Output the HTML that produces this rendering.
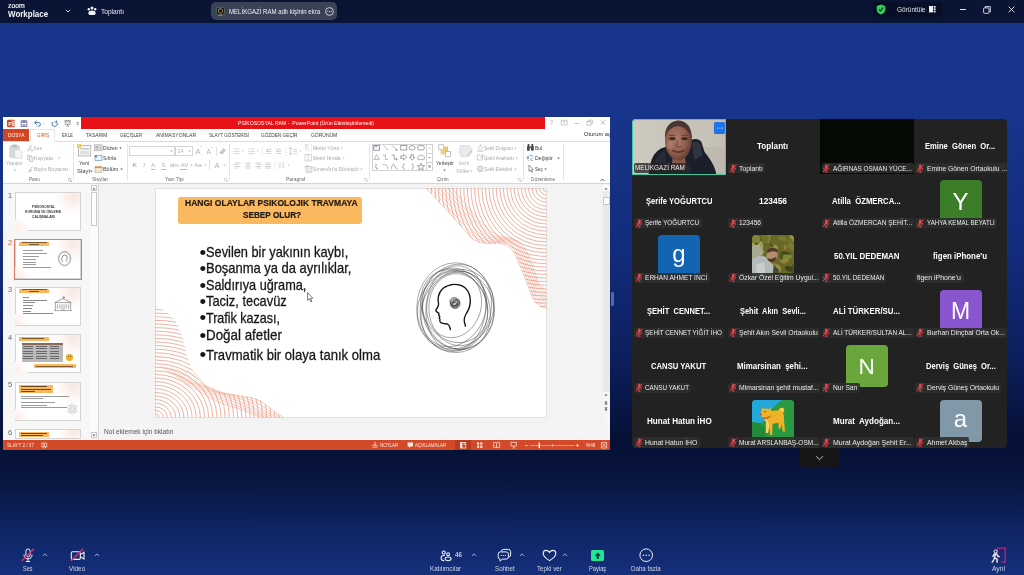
<!DOCTYPE html>
<html lang="tr">
<head>
<meta charset="utf-8">
<title>Zoom Workplace</title>
<style>
*{box-sizing:border-box;margin:0;padding:0}
html,body{width:1024px;height:575px;overflow:hidden}
body{position:relative;font-family:"Liberation Sans",sans-serif;color:#fff;
background:linear-gradient(to bottom,#17358b 0px,#17358b 110px,#132c7c 250px,#0d2060 350px,#061036 440px,#08153f 480px,#0f2464 530px,#15307c 575px);}
#app{position:absolute;left:0;top:0;width:1024px;height:575px;overflow:hidden;will-change:transform}
.abs{position:absolute}
.t{position:absolute;white-space:pre;line-height:1;display:block}
svg{position:absolute;overflow:visible}
</style>
</head>
<body>
<div id="app">
<div id="topbar" class="abs" style="left:0;top:0;width:1024px;height:22.5px;background:#0a1434"></div>
<span class="t" style="left:8.20px;top:2.16px;font-size:8px;color:#f2f4f8;transform:scaleX(0.8588);transform-origin:0 0;-webkit-text-stroke:0.2px #f2f4f8;">zoom</span>
<span class="t" style="left:8.20px;top:8.81px;font-size:9.6px;font-weight:bold;color:#f4f6fa;transform:scaleX(0.8310);transform-origin:0 0;">Workplace</span>
<svg style="left:64px;top:7.7px" width="8" height="6" viewBox="0 0 8 6"><path d="M1.8 1.8 L4 4 L6.2 1.8" fill="none" stroke="#c9cfdd" stroke-width="1"/></svg>
<svg style="left:87px;top:6px" width="10" height="10" viewBox="0 0 10 10"><g fill="#f0f2f7"><circle cx="5" cy="1.9" r="1.5"/><circle cx="1.8" cy="3.3" r="1.2"/><circle cx="8.2" cy="3.3" r="1.2"/><path d="M1.4 7.2 Q1.4 4.6 5 4.6 Q8.6 4.6 8.6 7.2 Q8.6 8.9 7 8.9 L3 8.9 Q1.4 8.9 1.4 7.2Z"/></g></svg>
<span class="t" style="left:101.00px;top:7.82px;font-size:7.6px;color:#e4e8f0;transform:scaleX(0.8640);transform-origin:0 0;">Toplantı</span>
<div class="abs" style="left:211px;top:2px;width:126px;height:18px;background:#3a4257;border-radius:5px"></div>
<svg style="left:216px;top:7px" width="9" height="9" viewBox="0 0 9 9"><rect x="0.5" y="0.5" width="8" height="7" rx="1.5" fill="#15181f" stroke="#6d7a5a" stroke-width="0.6"/><circle cx="4.5" cy="4" r="2.2" fill="none" stroke="#d08a3a" stroke-width="0.8"/><path d="M2.3 4 A2.2 2.2 0 0 1 4.5 1.8" fill="none" stroke="#3fb6c8" stroke-width="0.8"/><rect x="2.5" y="8" width="4" height="0.8" fill="#6fae5a"/></svg>
<span class="t" style="left:229.30px;top:7.96px;font-size:8px;color:#eef0f5;transform:scaleX(0.7589);transform-origin:0 0;">MELİKGAZİ RAM adlı kişinin ekra</span>
<svg style="left:325px;top:6.5px" width="9" height="9" viewBox="0 0 9 9"><circle cx="4.5" cy="4.5" r="3.9" fill="none" stroke="#e6e9f0" stroke-width="0.8"/><circle cx="2.8" cy="4.5" r="0.55" fill="#e6e9f0"/><circle cx="4.5" cy="4.5" r="0.55" fill="#e6e9f0"/><circle cx="6.2" cy="4.5" r="0.55" fill="#e6e9f0"/></svg>
<div class="abs" style="left:873px;top:2px;width:70px;height:15px;background:#070f26;border-radius:4px"></div>
<svg style="left:876px;top:4px" width="10" height="11" viewBox="0 0 10 11"><path d="M5 0.4 L9.3 2 L9.3 5.4 Q9.3 8.6 5 10.6 Q0.7 8.6 0.7 5.4 L0.7 2 Z" fill="#2fd157"/><path d="M2.9 5.3 L4.4 6.9 L7.2 3.7" fill="none" stroke="#0b2a17" stroke-width="1.1"/></svg>
<span class="t" style="left:897.00px;top:5.98px;font-size:7.2px;color:#e4e8f0;transform:scaleX(0.9013);transform-origin:0 0;">Görüntüle</span>
<svg style="left:929px;top:6.3px" width="7" height="7" viewBox="0 0 7 7"><g fill="#eef0f5"><rect x="0" y="0" width="4" height="6.4"/><rect x="4.7" y="0" width="1.9" height="1.7"/><rect x="4.7" y="2.35" width="1.9" height="1.7"/><rect x="4.7" y="4.7" width="1.9" height="1.7"/></g></svg>
<div class="abs" style="left:959.5px;top:9px;width:6px;height:1px;background:#e3e6ee;"></div>
<svg style="left:983px;top:5.5px" width="8" height="8" viewBox="0 0 8 8"><rect x="0.6" y="1.9" width="5.4" height="5.4" rx="0.8" fill="none" stroke="#e3e6ee" stroke-width="0.9"/><path d="M2.2 1.9 L2.2 0.6 L7.3 0.6 L7.3 5.8 L6 5.8" fill="none" stroke="#e3e6ee" stroke-width="0.9"/></svg>
<svg style="left:1008px;top:6px" width="7" height="7" viewBox="0 0 7 7"><path d="M0.6 0.6 L6.4 6.4 M6.4 0.6 L0.6 6.4" stroke="#e3e6ee" stroke-width="0.9" fill="none"/></svg>
<div id="ppt" class="abs" style="left:0;top:0;width:1024px;height:575px;filter:blur(0.4px)">
<div class="abs" style="left:3px;top:117.4px;width:607px;height:332.6px;background:#fff;"></div>
<div class="abs" style="left:81px;top:117.4px;width:464px;height:11.4px;background:#e81216;"></div>
<span class="t" style="left:237.50px;top:121.04px;font-size:5.9px;color:#fff;transform:scaleX(0.8678);transform-origin:0 0;">PSİKOSOSYAL RAM -  PowerPoint (Ürün Etkinleştirilemedi)</span>
<svg style="left:6px;top:118.5px" width="76" height="9" viewBox="0 0 76 9"><rect x="1.2" y="0.8" width="7.6" height="7.4" rx="0.8" fill="#d24726"/><rect x="4.6" y="1.6" width="4.2" height="5.8" fill="#f0b8a6"/><rect x="1.2" y="1.8" width="4.6" height="5.4" fill="#c43e1c"/><text x="2.2" y="6.6" font-family="Liberation Sans, sans-serif" font-size="5.2" font-weight="bold" fill="#fff">P</text><rect x="15.2" y="1.8" width="5.6" height="5.6" fill="none" stroke="#6a6cae" stroke-width="0.9"/><rect x="16.4" y="2" width="3.2" height="1.9" fill="#6a6cae"/><rect x="16.6" y="5.2" width="2.8" height="2" fill="#9a9cca"/><path d="M29.2 3.6 L32.4 3.6 Q34.4 3.6 34.4 5.5 Q34.4 7.2 32.4 7.2 L31.6 7.2" fill="none" stroke="#3a74b8" stroke-width="1"/><path d="M30.6 1.6 L28.6 3.6 L30.6 5.6" fill="none" stroke="#3a74b8" stroke-width="1"/><path d="M37.2 4.4 L38.8 4.4 L38 5.4Z" fill="#888"/><path d="M50.2 2.8 A2.6 2.6 0 1 1 46.8 3" fill="none" stroke="#4a78ac" stroke-width="1"/><path d="M50.4 1.2 L50.4 3.1 L48.5 3.1" fill="none" stroke="#4a78ac" stroke-width="0.8"/><rect x="58.4" y="1.4" width="6.4" height="0.8" fill="#777"/><rect x="59.1" y="2.2" width="5" height="3.2" fill="#e4e4e4" stroke="#858585" stroke-width="0.6"/><path d="M61.6 5.4 L61.6 6.8 M60.2 8 L61.6 6.6 L63 8" stroke="#777" stroke-width="0.7" fill="none"/><rect x="70.6" y="3.2" width="2.2" height="0.6" fill="#666"/><path d="M70.5 4.8 L72.9 4.8 L71.7 6.2Z" fill="#666"/></svg>
<span class="t" style="left:549.60px;top:119.81px;font-size:6.4px;color:#a8a8a8;">?</span>
<svg style="left:560px;top:119px" width="48" height="8" viewBox="0 0 48 8"><rect x="1.2" y="1.2" width="5.8" height="4.8" fill="none" stroke="#b4b4b4" stroke-width="0.7"/><path d="M3 3 L5.2 3 M4.1 2.2 L4.1 4.6" stroke="#b4b4b4" stroke-width="0.6"/><rect x="14.6" y="4" width="4.6" height="0.8" fill="#b0b0b0"/><rect x="27" y="2.6" width="4" height="3.6" fill="none" stroke="#b4b4b4" stroke-width="0.7"/><path d="M28.4 2.6 L28.4 1.2 L32.6 1.2 L32.6 4.8 L31 4.8" fill="none" stroke="#b4b4b4" stroke-width="0.7"/><path d="M40.8 1.2 L45.2 5.8 M45.2 1.2 L40.8 5.8" stroke="#a8a8a8" stroke-width="0.8"/></svg>
<div class="abs" style="left:3px;top:129px;width:26.2px;height:11.6px;background:#d14524;"></div>
<span class="t" style="left:7.80px;top:132.14px;font-size:6.2px;color:#fff;transform:scaleX(0.7719);transform-origin:0 0;">DOSYA</span>
<div class="abs" style="left:29.8px;top:129.4px;width:25.4px;height:12px;background:#fff;border:0.7px solid #e4e4e4;border-bottom:none"></div>
<span class="t" style="left:37.00px;top:132.24px;font-size:6.2px;color:#d8532f;transform:scaleX(0.7227);transform-origin:0 0;">GİRİŞ</span>
<span class="t" style="left:61.70px;top:132.24px;font-size:6.2px;color:#3e3e3e;transform:scaleX(0.6875);transform-origin:0 0;">EKLE</span>
<span class="t" style="left:86.40px;top:132.24px;font-size:6.2px;color:#3e3e3e;transform:scaleX(0.7897);transform-origin:0 0;">TASARIM</span>
<span class="t" style="left:120.30px;top:132.24px;font-size:6.2px;color:#3e3e3e;transform:scaleX(0.7080);transform-origin:0 0;">GEÇİŞLER</span>
<span class="t" style="left:155.60px;top:132.24px;font-size:6.2px;color:#3e3e3e;transform:scaleX(0.8159);transform-origin:0 0;">ANİMASYONLAR</span>
<span class="t" style="left:208.80px;top:132.24px;font-size:6.2px;color:#3e3e3e;transform:scaleX(0.7369);transform-origin:0 0;">SLAYT GÖSTERİSİ</span>
<span class="t" style="left:261.40px;top:132.24px;font-size:6.2px;color:#3e3e3e;transform:scaleX(0.7644);transform-origin:0 0;">GÖZDEN GEÇİR</span>
<span class="t" style="left:311.00px;top:132.24px;font-size:6.2px;color:#3e3e3e;transform:scaleX(0.8038);transform-origin:0 0;">GÖRÜNÜM</span>
<div class="abs" style="left:580px;top:128px;width:29.8px;height:12px;overflow:hidden"><span class="t" style="left:4.20px;top:3.84px;font-size:5.9px;color:#333;transform:scaleX(0.9803);transform-origin:0 0;">Oturum aç</span></div>
<div class="abs" style="left:3px;top:141px;width:607px;height:0.7px;background:#dcdcdc;"></div>
<div class="abs" style="left:29.8px;top:140.6px;width:25.4px;height:1.4px;background:#fff;"></div>
<div class="abs" style="left:3px;top:183.2px;width:607px;height:0.8px;background:#d4d4d4;"></div>
<div class="abs" style="left:73.4px;top:144px;width:0.6px;height:36px;background:#e4e4e4;"></div>
<div class="abs" style="left:127.3px;top:144px;width:0.6px;height:36px;background:#e4e4e4;"></div>
<div class="abs" style="left:229.4px;top:144px;width:0.6px;height:36px;background:#e4e4e4;"></div>
<div class="abs" style="left:369.4px;top:144px;width:0.6px;height:36px;background:#e4e4e4;"></div>
<div class="abs" style="left:523.3px;top:144px;width:0.6px;height:36px;background:#e4e4e4;"></div>
<div class="abs" style="left:563px;top:144px;width:0.6px;height:36px;background:#e4e4e4;"></div>
<svg style="left:9px;top:144px" width="14" height="15" viewBox="0 0 14 15"><rect x="0.8" y="1.8" width="9.6" height="11.6" rx="0.8" fill="#d9d9d9" stroke="#c4c4c4" stroke-width="0.6"/><rect x="3.2" y="0.6" width="4.8" height="2.6" rx="0.6" fill="#bdbdbd"/><path d="M5.6 5.6 L10.6 5.6 L12.8 7.8 L12.8 14.2 L5.6 14.2Z" fill="#f4f4f4" stroke="#c8c8c8" stroke-width="0.6"/></svg>
<span class="t" style="left:6.20px;top:161.00px;font-size:5.8px;color:#a9a9a9;transform:scaleX(0.8591);transform-origin:0 0;">Yapıştır</span>
<svg style="left:13px;top:169.4px" width="4" height="3" viewBox="0 0 4 3"><path d="M0.6 0.6 L3.4 0.6 L2 2.2Z" fill="#bcbcbc"/></svg>
<svg style="left:26.5px;top:143.6px" width="7" height="30" viewBox="0 0 7 30"><path d="M1.6 0.8 L4.8 5.4 M5 0.8 L1.8 5.4" stroke="#bdbdbd" stroke-width="0.7"/><circle cx="1.6" cy="6.2" r="1" fill="none" stroke="#bdbdbd" stroke-width="0.6"/><circle cx="5" cy="6.2" r="1" fill="none" stroke="#bdbdbd" stroke-width="0.6"/><rect x="0.6" y="11.4" width="3.6" height="4.4" fill="#efefef" stroke="#bdbdbd" stroke-width="0.6"/><rect x="2.4" y="13" width="3.6" height="4.4" fill="#efefef" stroke="#bdbdbd" stroke-width="0.6"/><path d="M1.2 27.6 L3.4 24.6 L5 25.8 L3.4 28.4Z" fill="#c9c9c9"/><path d="M3.8 24.4 L5.8 22.4" stroke="#bdbdbd" stroke-width="0.9"/></svg>
<span class="t" style="left:34.00px;top:145.50px;font-size:5.8px;color:#a9a9a9;transform:scaleX(0.8004);transform-origin:0 0;">Kes</span>
<span class="t" style="left:34.00px;top:156.20px;font-size:5.8px;color:#a9a9a9;transform:scaleX(0.8969);transform-origin:0 0;">Kopyala</span>
<svg style="left:57px;top:157px" width="4" height="3" viewBox="0 0 4 3"><path d="M0.6 0.6 L3.4 0.6 L2 2.2Z" fill="#c8c8c8"/></svg>
<span class="t" style="left:34.00px;top:167.00px;font-size:5.8px;color:#a9a9a9;transform:scaleX(0.8940);transform-origin:0 0;">Biçim Boyacısı</span>
<span class="t" style="left:29.00px;top:177.44px;font-size:5.9px;color:#6a6a6a;transform:scaleX(0.7838);transform-origin:0 0;">Pano</span>
<svg style="left:67.5px;top:177.5px" width="4" height="4" viewBox="0 0 4 4"><path d="M0.5 0.5 L0.5 3.5 M0.5 0.5 L3.5 0.5 M1.6 1.6 L3.5 3.5 M3.5 1.8 L3.5 3.5 L1.8 3.5" stroke="#9a9a9a" stroke-width="0.5" fill="none"/></svg>
<svg style="left:77px;top:143.5px" width="15" height="13" viewBox="0 0 15 13"><rect x="1.4" y="1.6" width="12.4" height="10.4" fill="#fafafa" stroke="#9b9b9b" stroke-width="0.7"/><rect x="3.2" y="4" width="8.8" height="1.6" fill="#c9c9c9"/><rect x="3.2" y="6.8" width="8.8" height="3.6" fill="#dedede"/><rect x="0.4" y="0.4" width="3.4" height="3.4" fill="#f6d760" stroke="#d9b63c" stroke-width="0.4"/></svg>
<span class="t" style="left:79.00px;top:161.04px;font-size:5.9px;color:#3c3c3c;transform:scaleX(0.8875);transform-origin:0 0;">Yeni</span>
<span class="t" style="left:76.50px;top:168.64px;font-size:5.9px;color:#3c3c3c;transform:scaleX(0.9987);transform-origin:0 0;">Slayt</span>
<svg style="left:89.8px;top:169.8px" width="3" height="3" viewBox="0 0 3 3"><path d="M0.3 0.6 L2.7 0.6 L1.5 2.2Z" fill="#666"/></svg>
<svg style="left:94.2px;top:143.6px" width="9" height="30" viewBox="0 0 9 30"><rect x="0.5" y="0.8" width="7.6" height="6" fill="#e2e2e2" stroke="#a8a8a8" stroke-width="0.6"/><rect x="1.6" y="2" width="2.4" height="3.6" fill="#bcbcbc"/><rect x="4.8" y="2" width="2.4" height="3.6" fill="#cfcfcf"/><rect x="1" y="11.6" width="7" height="5" fill="#eef3fa" stroke="#5d8cc4" stroke-width="0.6"/><path d="M0.4 12.6 L2.6 10.8 L2.6 14Z" fill="#3f7ac0"/><rect x="1" y="23" width="7" height="5.2" fill="#f0e6d6" stroke="#c49a6a" stroke-width="0.6"/><rect x="1" y="22.4" width="7" height="1.4" fill="#d98a4a"/></svg>
<span class="t" style="left:103.40px;top:145.54px;font-size:5.9px;color:#3c3c3c;transform:scaleX(0.8560);transform-origin:0 0;">Düzen</span>
<svg style="left:118.9px;top:146.6px" width="3" height="3" viewBox="0 0 3 3"><path d="M0.3 0.6 L2.7 0.6 L1.5 2.2Z" fill="#666"/></svg>
<span class="t" style="left:103.40px;top:156.24px;font-size:5.9px;color:#3c3c3c;transform:scaleX(0.8436);transform-origin:0 0;">Sıfırla</span>
<span class="t" style="left:103.40px;top:167.04px;font-size:5.9px;color:#3c3c3c;transform:scaleX(0.9208);transform-origin:0 0;">Bölüm</span>
<svg style="left:119.8px;top:168.2px" width="3" height="3" viewBox="0 0 3 3"><path d="M0.3 0.6 L2.7 0.6 L1.5 2.2Z" fill="#666"/></svg>
<span class="t" style="left:92.00px;top:177.44px;font-size:5.9px;color:#6a6a6a;transform:scaleX(0.8132);transform-origin:0 0;">Slaytlar</span>
<div class="abs" style="left:129.4px;top:146.2px;width:45.6px;height:10.2px;background:#fff;border:0.7px solid #d6d6d6"></div>
<div class="abs" style="left:174.6px;top:146.2px;width:18.6px;height:10.2px;background:#fff;border:0.7px solid #d6d6d6"></div>
<svg style="left:170px;top:150.4px" width="3" height="3" viewBox="0 0 3 3"><path d="M0.3 0.6 L2.7 0.6 L1.5 2.2Z" fill="#b5b5b5"/></svg>
<svg style="left:188.4px;top:150.4px" width="3" height="3" viewBox="0 0 3 3"><path d="M0.3 0.6 L2.7 0.6 L1.5 2.2Z" fill="#b5b5b5"/></svg>
<span class="t" style="left:177.40px;top:149.33px;font-size:5.6px;color:#b9b9b9;">24</span>
<span class="t" style="left:195.60px;top:148.42px;font-size:7.6px;color:#b4b4b4;">A</span>
<span class="t" style="left:200.60px;top:146.32px;font-size:5px;color:#b4b4b4;">ˆ</span>
<span class="t" style="left:206.60px;top:149.48px;font-size:6.6px;color:#b4b4b4;">A</span>
<span class="t" style="left:211.00px;top:146.53px;font-size:5px;color:#b4b4b4;">ˇ</span>
<div class="abs" style="left:215.6px;top:146.6px;width:0.6px;height:9.4px;background:#e2e2e2;"></div>
<svg style="left:219px;top:147.4px" width="8" height="8" viewBox="0 0 8 8"><path d="M1 5.6 L4.4 1 L7 3 L3.6 7.4Z" fill="#c9c9c9"/><path d="M0.6 5 L3 6.8" stroke="#e6a0b8" stroke-width="1.2"/></svg>
<span class="t" style="left:132.60px;top:162.14px;font-size:6.2px;font-weight:bold;color:#b2b2b2;">K</span>
<span class="t" style="left:143.20px;top:162.14px;font-size:6.2px;font-style:italic;color:#b2b2b2;">I</span>
<span class="t" style="left:151.00px;top:162.14px;font-size:6.2px;color:#b2b2b2;">A</span>
<span class="t" style="left:161.60px;top:162.14px;font-size:6.2px;color:#b2b2b2;">S</span>
<span class="t" style="left:170.00px;top:162.93px;font-size:5.6px;color:#b2b2b2;">abc</span>
<span class="t" style="left:180.60px;top:162.14px;font-size:6.2px;color:#b2b2b2;">AV</span>
<span class="t" style="left:194.20px;top:162.14px;font-size:6.2px;color:#b2b2b2;">Aa</span>
<span class="t" style="left:214.40px;top:161.55px;font-size:7.4px;color:#b2b2b2;">A</span>
<div class="abs" style="left:150.6px;top:168.6px;width:4.8px;height:0.6px;background:#b8b8b8;"></div>
<div class="abs" style="left:161.2px;top:168.6px;width:4.6px;height:0.6px;background:#b8b8b8;"></div>
<div class="abs" style="left:180.4px;top:168.6px;width:7px;height:0.6px;background:#b8b8b8;"></div>
<svg style="left:189.6px;top:164px" width="3" height="3" viewBox="0 0 3 3"><path d="M0.3 0.6 L2.7 0.6 L1.5 2.2Z" fill="#c2c2c2"/></svg>
<svg style="left:203.6px;top:164px" width="3" height="3" viewBox="0 0 3 3"><path d="M0.3 0.6 L2.7 0.6 L1.5 2.2Z" fill="#c2c2c2"/></svg>
<svg style="left:223px;top:164px" width="3" height="3" viewBox="0 0 3 3"><path d="M0.3 0.6 L2.7 0.6 L1.5 2.2Z" fill="#c2c2c2"/></svg>
<div class="abs" style="left:209.2px;top:160.4px;width:0.6px;height:9.4px;background:#e2e2e2;"></div>
<span class="t" style="left:165.30px;top:177.44px;font-size:5.9px;color:#6a6a6a;transform:scaleX(0.8428);transform-origin:0 0;">Yazı Tipi</span>
<svg style="left:223.5px;top:177.5px" width="4" height="4" viewBox="0 0 4 4"><path d="M0.5 0.5 L0.5 3.5 M0.5 0.5 L3.5 0.5 M1.6 1.6 L3.5 3.5 M3.5 1.8 L3.5 3.5 L1.8 3.5" stroke="#b5b5b5" stroke-width="0.5" fill="none"/></svg>
<svg style="left:232px;top:144px" width="80" height="30" viewBox="0 0 80 30"><rect x="1" y="4.6" width="0.9" height="0.8" fill="#c2c2c2"/><rect x="2.8" y="4.6" width="4.6" height="0.7" fill="#c2c2c2"/><rect x="1" y="7.0" width="0.9" height="0.8" fill="#c2c2c2"/><rect x="2.8" y="7.0" width="4.6" height="0.7" fill="#c2c2c2"/><rect x="1" y="9.399999999999999" width="0.9" height="0.8" fill="#c2c2c2"/><rect x="2.8" y="9.399999999999999" width="4.6" height="0.7" fill="#c2c2c2"/><path d="M9.4 6.4 L11.8 6.4 L10.6 7.8Z" fill="#c6c6c6"/><rect x="16" y="4.6" width="0.9" height="0.8" fill="#c2c2c2"/><rect x="17.8" y="4.6" width="4.6" height="0.7" fill="#c2c2c2"/><rect x="16" y="7.0" width="0.9" height="0.8" fill="#c2c2c2"/><rect x="17.8" y="7.0" width="4.6" height="0.7" fill="#c2c2c2"/><rect x="16" y="9.399999999999999" width="0.9" height="0.8" fill="#c2c2c2"/><rect x="17.8" y="9.399999999999999" width="4.6" height="0.7" fill="#c2c2c2"/><path d="M24.6 6.4 L27 6.4 L25.8 7.8Z" fill="#c6c6c6"/><rect x="30" y="2.6" width="0.6" height="9.4" fill="#e2e2e2"/><rect x="34.4" y="4.8" width="5" height="0.7" fill="#c2c2c2"/><rect x="34.4" y="7.0" width="5" height="0.7" fill="#c2c2c2"/><rect x="34.4" y="9.2" width="5" height="0.7" fill="#c2c2c2"/><path d="M34.2 7 L36 5.8 L36 8.2Z" fill="#bdbdbd"/><rect x="44.6" y="4.8" width="5" height="0.7" fill="#c2c2c2"/><rect x="44.6" y="7.0" width="5" height="0.7" fill="#c2c2c2"/><rect x="44.6" y="9.2" width="5" height="0.7" fill="#c2c2c2"/><path d="M46.4 7 L44.6 5.8 L44.6 8.2Z" fill="#bdbdbd"/><rect x="53.6" y="2.6" width="0.6" height="9.4" fill="#e2e2e2"/><path d="M58.6 3.6 L58.6 10.8 M57.2 5 L58.6 3.4 L60 5 M57.2 9.4 L58.6 11 L60 9.4" stroke="#b5b5b5" stroke-width="0.6" fill="none"/><rect x="61.4" y="5.0" width="3.6" height="0.7" fill="#c2c2c2"/><rect x="61.4" y="7.2" width="3.6" height="0.7" fill="#c2c2c2"/><rect x="61.4" y="9.4" width="3.6" height="0.7" fill="#c2c2c2"/><path d="M67.4 6.6 L69.8 6.6 L68.6 8Z" fill="#c6c6c6"/><rect x="2.6" y="18.6" width="5.6" height="0.7" fill="#c2c2c2"/><rect x="2.6" y="20.3" width="3.8" height="0.7" fill="#c2c2c2"/><rect x="2.6" y="22.0" width="5.6" height="0.7" fill="#c2c2c2"/><rect x="2.6" y="23.700000000000003" width="3.8" height="0.7" fill="#c2c2c2"/><rect x="13.2" y="18.6" width="5.6" height="0.7" fill="#c2c2c2"/><rect x="14.1" y="20.3" width="3.8" height="0.7" fill="#c2c2c2"/><rect x="13.2" y="22.0" width="5.6" height="0.7" fill="#c2c2c2"/><rect x="14.1" y="23.700000000000003" width="3.8" height="0.7" fill="#c2c2c2"/><rect x="23.2" y="18.6" width="5.6" height="0.7" fill="#c2c2c2"/><rect x="25.0" y="20.3" width="3.8" height="0.7" fill="#c2c2c2"/><rect x="23.2" y="22.0" width="5.6" height="0.7" fill="#c2c2c2"/><rect x="25.0" y="23.700000000000003" width="3.8" height="0.7" fill="#c2c2c2"/><rect x="33" y="18.6" width="5.8" height="0.7" fill="#c2c2c2"/><rect x="33" y="20.3" width="5.8" height="0.7" fill="#c2c2c2"/><rect x="33" y="22.0" width="5.8" height="0.7" fill="#c2c2c2"/><rect x="33" y="23.700000000000003" width="5.8" height="0.7" fill="#c2c2c2"/><rect x="42.6" y="16.6" width="0.6" height="9.4" fill="#e2e2e2"/><rect x="46.6" y="18.8" width="2.4" height="0.7" fill="#c2c2c2"/><rect x="46.6" y="20.8" width="2.4" height="0.7" fill="#c2c2c2"/><rect x="46.6" y="22.8" width="2.4" height="0.7" fill="#c2c2c2"/><rect x="50" y="18.8" width="2.4" height="0.7" fill="#c2c2c2"/><rect x="50" y="20.8" width="2.4" height="0.7" fill="#c2c2c2"/><rect x="50" y="22.8" width="2.4" height="0.7" fill="#c2c2c2"/><path d="M55.4 20.6 L57.8 20.6 L56.6 22Z" fill="#c6c6c6"/></svg>
<svg style="left:304.4px;top:143.4px" width="9" height="32" viewBox="0 0 9 32"><path d="M2 1.4 L2 7.4 M1 2.6 L2 1.2 L3 2.6" stroke="#b5b5b5" stroke-width="0.6" fill="none"/><rect x="4" y="1.2" width="3.6" height="6.6" fill="none" stroke="#bdbdbd" stroke-width="0.5" stroke-dasharray="0.8 0.6"/><rect x="1" y="11.6" width="6.6" height="6.4" fill="none" stroke="#bdbdbd" stroke-width="0.6"/><path d="M4.3 12.4 L4.3 17.2 M3.4 13.4 L4.3 12.4 L5.2 13.4 M3.4 16.2 L4.3 17.2 L5.2 16.2" stroke="#b5b5b5" stroke-width="0.5" fill="none"/><rect x="2" y="23.6" width="6" height="5.6" fill="#ececec" stroke="#b9b9b9" stroke-width="0.6"/><path d="M0.6 24.6 L3 22.4 L5.2 23.4" fill="none" stroke="#b0b0b0" stroke-width="0.7"/></svg>
<span class="t" style="left:313.00px;top:145.50px;font-size:5.8px;color:#a9a9a9;transform:scaleX(0.9030);transform-origin:0 0;">Metin Yönü</span>
<span class="t" style="left:313.00px;top:156.20px;font-size:5.8px;color:#a9a9a9;transform:scaleX(0.8649);transform-origin:0 0;">Metni Hizala</span>
<span class="t" style="left:313.00px;top:167.00px;font-size:5.8px;color:#a9a9a9;transform:scaleX(0.8823);transform-origin:0 0;">SmartArt&#x27;a Dönüştür</span>
<svg style="left:340.4px;top:146.6px" width="3" height="3" viewBox="0 0 3 3"><path d="M0.3 0.6 L2.7 0.6 L1.5 2.2Z" fill="#c2c2c2"/></svg>
<svg style="left:341.6px;top:157.2px" width="3" height="3" viewBox="0 0 3 3"><path d="M0.3 0.6 L2.7 0.6 L1.5 2.2Z" fill="#c2c2c2"/></svg>
<svg style="left:360.4px;top:168.2px" width="3" height="3" viewBox="0 0 3 3"><path d="M0.3 0.6 L2.7 0.6 L1.5 2.2Z" fill="#c2c2c2"/></svg>
<span class="t" style="left:285.80px;top:177.44px;font-size:5.9px;color:#6a6a6a;transform:scaleX(0.8484);transform-origin:0 0;">Paragraf</span>
<svg style="left:363.5px;top:177.5px" width="4" height="4" viewBox="0 0 4 4"><path d="M0.5 0.5 L0.5 3.5 M0.5 0.5 L3.5 0.5 M1.6 1.6 L3.5 3.5 M3.5 1.8 L3.5 3.5 L1.8 3.5" stroke="#b5b5b5" stroke-width="0.5" fill="none"/></svg>
<div class="abs" style="left:372.4px;top:143.6px;width:60.4px;height:27.8px;background:#fff;border:0.7px solid #d2d2d2"></div>
<div class="abs" style="left:426.2px;top:143.6px;width:0.7px;height:27.8px;background:#d2d2d2;"></div>
<div class="abs" style="left:426.2px;top:152.6px;width:6.6px;height:0.7px;background:#d2d2d2;"></div>
<div class="abs" style="left:426.2px;top:161.8px;width:6.6px;height:0.7px;background:#d2d2d2;"></div>
<svg style="left:372px;top:143px" width="62" height="29" viewBox="0 0 62 29"><g fill="none" stroke="#7d7d7d" stroke-width="0.7"><rect x="1.8" y="2.4" width="5.6" height="4.8" stroke="#5a6f94"/><path d="M2.8 3.8 L5 3.8" stroke="#5a6f94"/><path d="M11.4 2.4 L16 7.2" stroke="#a5a5a5"/><path d="M20 2.4 L25 7.4 M25 5.6 L25 7.4 L23.2 7.4" stroke="#8c8c8c"/><rect x="28.8" y="2.6" width="6" height="4.4"/><ellipse cx="40.2" cy="4.8" rx="3" ry="2.3"/><rect x="45.8" y="2.6" width="6.4" height="4.4" rx="1.2"/><path d="M2 16.4 L4.6 11.6 L7.2 16.4Z" stroke="#9a9a9a"/><path d="M11 12 L13.4 12 L13.4 16.4 L16 16.4" stroke="#9a9a9a"/><path d="M19.6 12 L22.2 12 L22.2 16.2 L25.2 16.2 M24 15 L25.4 16.2 L24 17.4"/><path d="M28.8 13 L31.6 13 L31.6 11.4 L34.8 14.2 L31.6 17 L31.6 15.4 L28.8 15.4Z"/><path d="M39 11.6 L41.4 11.6 L41.4 14.4 L42.8 14.4 L40.2 17.2 L37.6 14.4 L39 14.4Z"/><path d="M46 16.6 L46 13.6 Q47 11.6 49 12.4 Q50.2 11 51.4 12.6 Q53 13.4 52.2 16.6Z" stroke="#9a9a9a"/><path d="M3 20.6 Q5.6 21.6 3.8 23 Q2.4 24.4 5.4 25.6 M4.2 25.8 L5.6 25.6 L5 24.4" stroke="#8c8c8c"/><path d="M10.6 21.4 Q15.4 20.8 16 26" stroke="#9a9a9a"/><path d="M19.4 25.8 Q20.2 20 22.2 21.6 Q23.6 26.6 25.4 25.6" stroke="#8c8c8c"/><path d="M32.6 20.6 Q31.2 20.8 31.4 22.4 Q31.4 23.4 30.4 23.6 Q31.4 23.8 31.4 24.8 Q31.2 26.4 32.6 26.6" stroke="#8c8c8c"/><path d="M39.6 20.6 Q41 20.8 40.8 22.4 Q40.8 23.4 41.8 23.6 Q40.8 23.8 40.8 24.8 Q41 26.4 39.6 26.6" stroke="#8c8c8c"/><path d="M49 20.2 L50 22.6 L52.6 22.8 L50.6 24.4 L51.2 27 L49 25.6 L46.8 27 L47.4 24.4 L45.4 22.8 L48 22.6Z"/></g><path d="M56.4 6 L58.8 6 L57.6 4.6Z" fill="#c6c6c6"/><path d="M56.4 14 L58.8 14 L57.6 15.4Z" fill="#8a8a8a"/><path d="M56.2 22.4 L59 22.4 M56.4 23.4 L58.8 23.4 L57.6 24.8Z" fill="#8a8a8a" stroke="#8a8a8a" stroke-width="0.5"/></svg>
<svg style="left:437.6px;top:144px" width="14" height="14" viewBox="0 0 14 14"><rect x="0.8" y="0.8" width="4.8" height="4.8" fill="#fff" stroke="#9c9c9c" stroke-width="0.6"/><rect x="5" y="2.6" width="5" height="5" fill="#e4c86e"/><rect x="2.6" y="5.6" width="5" height="5" fill="#e9d58f"/><rect x="7.6" y="7.4" width="4.8" height="5" fill="#fff" stroke="#9c9c9c" stroke-width="0.6"/></svg>
<span class="t" style="left:435.50px;top:161.04px;font-size:5.9px;color:#3c3c3c;transform:scaleX(0.8484);transform-origin:0 0;">Yerleştir</span>
<svg style="left:443.2px;top:169.4px" width="3" height="3" viewBox="0 0 3 3"><path d="M0.3 0.6 L2.7 0.6 L1.5 2.2Z" fill="#666"/></svg>
<svg style="left:457.6px;top:144px" width="16" height="15" viewBox="0 0 16 15"><path d="M2.4 1.4 L10 1.4 L13.4 4 L13.6 9 L9 13 L3 12.4 L1.2 8Z" fill="#ece8ee" stroke="#d6d2d8" stroke-width="0.6"/><path d="M8.6 11.6 L13.6 5.8 L14.8 6.8 L9.8 12.6Z" fill="#cfcfcf"/></svg>
<span class="t" style="left:459.20px;top:161.00px;font-size:5.8px;color:#b4b4b4;transform:scaleX(0.8793);transform-origin:0 0;">Hızlı</span>
<span class="t" style="left:456.00px;top:168.60px;font-size:5.8px;color:#b4b4b4;transform:scaleX(0.9515);transform-origin:0 0;">Stiller</span>
<svg style="left:470.4px;top:169.8px" width="3" height="3" viewBox="0 0 3 3"><path d="M0.3 0.6 L2.7 0.6 L1.5 2.2Z" fill="#c2c2c2"/></svg>
<svg style="left:475.6px;top:143.4px" width="9" height="32" viewBox="0 0 9 32"><path d="M2 5.8 L4.6 2.2 L7 4.6 L4.6 7.4Z" fill="none" stroke="#b0b0b0" stroke-width="0.6"/><path d="M4 1 L5 2.6" stroke="#b0b0b0" stroke-width="0.6"/><rect x="1" y="7.8" width="7" height="1" fill="#d2d2d2"/><rect x="1.2" y="12" width="5.4" height="5" fill="none" stroke="#b5b5b5" stroke-width="0.6"/><path d="M4.6 15 L7.8 11.6" stroke="#a8a8a8" stroke-width="0.9"/><ellipse cx="4.2" cy="25.4" rx="3" ry="2.4" fill="#e6e6e6" stroke="#b0b0b0" stroke-width="0.6"/><path d="M1.6 28.6 L7 28.6" stroke="#c8c8c8" stroke-width="0.8"/></svg>
<span class="t" style="left:484.00px;top:145.50px;font-size:5.8px;color:#a9a9a9;transform:scaleX(0.8177);transform-origin:0 0;">Şekil Dolgusu</span>
<span class="t" style="left:484.00px;top:156.20px;font-size:5.8px;color:#a9a9a9;transform:scaleX(0.8402);transform-origin:0 0;">Şekil Anahattı</span>
<span class="t" style="left:484.00px;top:167.00px;font-size:5.8px;color:#a9a9a9;transform:scaleX(0.8083);transform-origin:0 0;">Şekil Efektleri</span>
<svg style="left:514.2px;top:146.6px" width="3" height="3" viewBox="0 0 3 3"><path d="M0.3 0.6 L2.7 0.6 L1.5 2.2Z" fill="#c2c2c2"/></svg>
<svg style="left:515px;top:157.2px" width="3" height="3" viewBox="0 0 3 3"><path d="M0.3 0.6 L2.7 0.6 L1.5 2.2Z" fill="#c2c2c2"/></svg>
<svg style="left:513.6px;top:168.2px" width="3" height="3" viewBox="0 0 3 3"><path d="M0.3 0.6 L2.7 0.6 L1.5 2.2Z" fill="#c2c2c2"/></svg>
<span class="t" style="left:437.30px;top:177.44px;font-size:5.9px;color:#6a6a6a;transform:scaleX(0.7798);transform-origin:0 0;">Çizim</span>
<svg style="left:517.5px;top:177.5px" width="4" height="4" viewBox="0 0 4 4"><path d="M0.5 0.5 L0.5 3.5 M0.5 0.5 L3.5 0.5 M1.6 1.6 L3.5 3.5 M3.5 1.8 L3.5 3.5 L1.8 3.5" stroke="#b5b5b5" stroke-width="0.5" fill="none"/></svg>
<svg style="left:526px;top:143.4px" width="9" height="32" viewBox="0 0 9 32"><rect x="1" y="3" width="2.8" height="4.8" rx="0.8" fill="#4a4a4a"/><rect x="5" y="3" width="2.8" height="4.8" rx="0.8" fill="#4a4a4a"/><rect x="1.6" y="1" width="1.8" height="2.4" fill="#4a4a4a"/><rect x="5.4" y="1" width="1.8" height="2.4" fill="#4a4a4a"/><rect x="3.4" y="3.6" width="2" height="1.4" fill="#4a4a4a"/><text x="0.4" y="16" font-family="Liberation Sans, sans-serif" font-size="4.6" fill="#3d6cb0">a</text><text x="4.6" y="18.4" font-family="Liberation Sans, sans-serif" font-size="4.6" fill="#555">c</text><path d="M3.4 12.4 Q6.4 11.6 7 14" fill="none" stroke="#3d6cb0" stroke-width="0.6"/><path d="M2.8 18 L1.4 16.8" stroke="#3d6cb0" stroke-width="0.6"/><path d="M3 22 L3 28.4 L4.6 27 L5.8 29.4 L6.6 29 L5.4 26.8 L7.4 26.6Z" fill="#fff" stroke="#555" stroke-width="0.6"/></svg>
<span class="t" style="left:535.30px;top:145.54px;font-size:5.9px;color:#3c3c3c;transform:scaleX(0.8443);transform-origin:0 0;">Bul</span>
<span class="t" style="left:535.30px;top:156.24px;font-size:5.9px;color:#3c3c3c;transform:scaleX(0.8850);transform-origin:0 0;">Değiştir</span>
<svg style="left:557px;top:157.2px" width="3" height="3" viewBox="0 0 3 3"><path d="M0.3 0.6 L2.7 0.6 L1.5 2.2Z" fill="#666"/></svg>
<span class="t" style="left:535.30px;top:167.04px;font-size:5.9px;color:#3c3c3c;transform:scaleX(0.7574);transform-origin:0 0;">Seç</span>
<svg style="left:544px;top:168.2px" width="3" height="3" viewBox="0 0 3 3"><path d="M0.3 0.6 L2.7 0.6 L1.5 2.2Z" fill="#666"/></svg>
<span class="t" style="left:531.00px;top:177.44px;font-size:5.9px;color:#6a6a6a;transform:scaleX(0.8142);transform-origin:0 0;">Düzenleme</span>
<svg style="left:600.4px;top:177.6px" width="5" height="4" viewBox="0 0 5 4"><path d="M0.6 3 L2.5 1 L4.4 3" fill="none" stroke="#555" stroke-width="0.9"/></svg>
<div class="abs" style="left:3px;top:184px;width:607px;height:256px;background:#f3f3f3;"></div>
<div class="abs" style="left:3px;top:184px;width:95px;height:256px;background:#f7f7f7;"></div>
<div class="abs" style="left:98px;top:184px;width:0.8px;height:256px;background:#dadada;"></div>
<div class="abs" style="left:90.6px;top:185px;width:6.2px;height:252px;background:#fbfbfb;"></div>
<div class="abs" style="left:90.8px;top:185.2px;width:5.8px;height:6.2px;background:#fff;border:0.6px solid #c9c9c9"></div>
<svg style="left:92px;top:187px" width="4" height="3" viewBox="0 0 4 3"><path d="M0.4 2.4 L2 0.6 L3.6 2.4Z" fill="#666"/></svg>
<div class="abs" style="left:90.8px;top:191.6px;width:5.8px;height:34.8px;background:#fff;border:0.6px solid #c9c9c9"></div>
<div class="abs" style="left:90.8px;top:432px;width:5.8px;height:6.2px;background:#fff;border:0.6px solid #c9c9c9"></div>
<svg style="left:92px;top:434px" width="4" height="3" viewBox="0 0 4 3"><path d="M0.4 0.6 L2 2.4 L3.6 0.6Z" fill="#666"/></svg>
<span class="t" style="left:8.00px;top:191.75px;font-size:7.4px;color:#6a6a6a;">1</span>
<div class="abs" style="left:14.6px;top:192px;width:66.2px;height:39.4px;background:#fff;border:0.6px solid #d4d4d4;overflow:hidden;background:radial-gradient(circle at 90% 8%,#f9e6df 0,#fcf3f0 14%,#fff 28%),#fff"></div>
<div class="abs" style="left:15.2px;top:219.4px;width:16px;height:11.4px;background:radial-gradient(circle at 0% 100%,#fbebe5 0,#fef7f5 50%,rgba(255,255,255,0) 75%)"></div>
<span class="t" style="left:8.00px;top:239.15px;font-size:7.4px;color:#d8532f;">2</span>
<div class="abs" style="left:14.6px;top:239.4px;width:66.2px;height:39.4px;background:#fff;border:0.6px solid #d4d4d4;overflow:hidden;background:radial-gradient(circle at 90% 8%,#f9e6df 0,#fcf3f0 14%,#fff 28%),#fff"></div>
<div class="abs" style="left:15.2px;top:266.8px;width:16px;height:11.4px;background:radial-gradient(circle at 0% 100%,#fbebe5 0,#fef7f5 50%,rgba(255,255,255,0) 75%)"></div>
<span class="t" style="left:8.00px;top:286.35px;font-size:7.4px;color:#6a6a6a;">3</span>
<div class="abs" style="left:14.6px;top:286.6px;width:66.2px;height:39.4px;background:#fff;border:0.6px solid #d4d4d4;overflow:hidden;background:radial-gradient(circle at 90% 8%,#f9e6df 0,#fcf3f0 14%,#fff 28%),#fff"></div>
<div class="abs" style="left:15.2px;top:314.0px;width:16px;height:11.4px;background:radial-gradient(circle at 0% 100%,#fbebe5 0,#fef7f5 50%,rgba(255,255,255,0) 75%)"></div>
<span class="t" style="left:8.00px;top:333.65px;font-size:7.4px;color:#6a6a6a;">4</span>
<div class="abs" style="left:14.6px;top:333.9px;width:66.2px;height:39.4px;background:#fff;border:0.6px solid #d4d4d4;overflow:hidden;background:radial-gradient(circle at 90% 8%,#f9e6df 0,#fcf3f0 14%,#fff 28%),#fff"></div>
<div class="abs" style="left:15.2px;top:361.3px;width:16px;height:11.4px;background:radial-gradient(circle at 0% 100%,#fbebe5 0,#fef7f5 50%,rgba(255,255,255,0) 75%)"></div>
<span class="t" style="left:8.00px;top:381.45px;font-size:7.4px;color:#6a6a6a;">5</span>
<div class="abs" style="left:14.6px;top:381.7px;width:66.2px;height:39.4px;background:#fff;border:0.6px solid #d4d4d4;overflow:hidden;background:radial-gradient(circle at 90% 8%,#f9e6df 0,#fcf3f0 14%,#fff 28%),#fff"></div>
<div class="abs" style="left:15.2px;top:409.1px;width:16px;height:11.4px;background:radial-gradient(circle at 0% 100%,#fbebe5 0,#fef7f5 50%,rgba(255,255,255,0) 75%)"></div>
<span class="t" style="left:8.00px;top:428.85px;font-size:7.4px;color:#6a6a6a;">6</span>
<div class="abs" style="left:14.6px;top:429.1px;width:66.2px;height:10.4px;background:#fff;border:0.6px solid #d4d4d4;overflow:hidden;background:radial-gradient(circle at 90% 8%,#f9e6df 0,#fcf3f0 14%,#fff 28%),#fff"></div>
<div class="abs" style="left:13.8px;top:238.6px;width:67.8px;height:41px;border:1.5px solid #e07a5c"></div>
<span class="t" style="left:31.50px;top:205.02px;font-size:4.4px;font-weight:bold;color:#3a3a3a;transform:scaleX(0.7329);transform-origin:0 0;">PSİKOSOSYAL</span>
<span class="t" style="left:25.00px;top:210.02px;font-size:4.4px;font-weight:bold;color:#3a3a3a;transform:scaleX(0.7697);transform-origin:0 0;">KORUMA VE ÖNLEME</span>
<span class="t" style="left:31.50px;top:215.02px;font-size:4.4px;font-weight:bold;color:#3a3a3a;transform:scaleX(0.7589);transform-origin:0 0;">ÇALIŞMALARI</span>
<div class="abs" style="left:18.8px;top:241.6px;width:30.6px;height:4px;background:#f9b85c;border-radius:0.6px"></div>
<div class="abs" style="left:21.5px;top:242.4px;width:25px;height:0.7px;background:#7a5a2c;"></div>
<div class="abs" style="left:29px;top:243.8px;width:10px;height:0.7px;background:#7a5a2c;"></div>
<div class="abs" style="left:23px;top:250.0px;width:20px;height:0.7px;background:#9a9a9a;"></div>
<div class="abs" style="left:23px;top:252.75px;width:24px;height:0.7px;background:#9a9a9a;"></div>
<div class="abs" style="left:23px;top:256.0px;width:16px;height:0.7px;background:#9a9a9a;"></div>
<div class="abs" style="left:23px;top:258.75px;width:13px;height:0.7px;background:#9a9a9a;"></div>
<div class="abs" style="left:23px;top:261.5px;width:12.6px;height:0.7px;background:#9a9a9a;"></div>
<div class="abs" style="left:23px;top:264.25px;width:13px;height:0.7px;background:#9a9a9a;"></div>
<div class="abs" style="left:23px;top:267.0px;width:28px;height:0.7px;background:#9a9a9a;"></div>
<svg style="left:57px;top:250px" width="15" height="17" viewBox="0 0 15 17"><g fill="none" stroke="#8a8a8a" stroke-width="0.4"><ellipse cx="7.5" cy="8.6" rx="6.3" ry="7.4"/><ellipse cx="7.3" cy="8.4" rx="5.6" ry="6.8"/><ellipse cx="7.8" cy="8.8" rx="6" ry="6.6"/></g><path d="M5.2 11.8 L5.4 10.4 L4.6 9.4 L5.2 7.4 Q5.6 5 7.8 5 Q10.4 5.2 10.2 8 Q10 9.6 9.4 10.4 L9.8 11.6" fill="none" stroke="#444" stroke-width="0.6"/></svg>
<div class="abs" style="left:0;top:-0.7px;width:100px;height:450px">
<div class="abs" style="left:18.8px;top:289.2px;width:30.6px;height:4px;background:#f9b85c;border-radius:0.6px"></div>
<div class="abs" style="left:21.5px;top:290px;width:25px;height:0.7px;background:#7a5a2c;"></div>
<div class="abs" style="left:29px;top:291.4px;width:10px;height:0.7px;background:#7a5a2c;"></div>
<div class="abs" style="left:23px;top:297.6px;width:6px;height:0.7px;background:#8a8a8a;"></div>
<div class="abs" style="left:23px;top:300.35px;width:24px;height:0.7px;background:#8a8a8a;"></div>
<div class="abs" style="left:23px;top:303.1px;width:12px;height:0.7px;background:#8a8a8a;"></div>
<div class="abs" style="left:23px;top:305.85px;width:10px;height:0.7px;background:#8a8a8a;"></div>
<div class="abs" style="left:23px;top:308.6px;width:9px;height:0.7px;background:#8a8a8a;"></div>
<div class="abs" style="left:23px;top:311.35px;width:8px;height:0.7px;background:#8a8a8a;"></div>
<div class="abs" style="left:23px;top:314.1px;width:30px;height:0.7px;background:#8a8a8a;"></div>
<svg style="left:53px;top:297px" width="20" height="16" viewBox="0 0 20 16"><g fill="none" stroke="#555" stroke-width="0.5"><path d="M1 14.6 L19 14.6 M2.4 14.6 L2.4 6.6 L17.6 6.6 L17.6 14.6 M1.6 6.6 L10 2.6 L18.4 6.6 M10 2.6 L10 0.8 L12 1.4 L10 2"/><path d="M4.4 8.4 L4.4 12.6 M6.8 8.4 L6.8 12.6 M9 8.4 L9 14.6 M11 8.4 L11 14.6 M13.2 8.4 L13.2 12.6 M15.6 8.4 L15.6 12.6"/></g></svg>
<div class="abs" style="left:18.8px;top:337.4px;width:30.6px;height:4px;background:#f9b85c;border-radius:0.6px"></div>
<div class="abs" style="left:22px;top:339px;width:22px;height:0.7px;background:#7a5a2c;"></div>
<div class="abs" style="left:21.6px;top:343.8px;width:41.4px;height:18.6px;background:#b9b9b9;"></div>
<div class="abs" style="left:21.6px;top:343.8px;width:41.4px;height:1.6px;background:#8a6a5a;"></div>
<div class="abs" style="left:23px;top:346.6px;width:10px;height:0.7px;background:#6a6a6a;"></div>
<div class="abs" style="left:35.5px;top:346.6px;width:11px;height:0.7px;background:#6a6a6a;"></div>
<div class="abs" style="left:49.5px;top:346.6px;width:9px;height:0.7px;background:#6a6a6a;"></div>
<div class="abs" style="left:23px;top:349.1px;width:10px;height:0.7px;background:#6a6a6a;"></div>
<div class="abs" style="left:35.5px;top:349.1px;width:11px;height:0.7px;background:#6a6a6a;"></div>
<div class="abs" style="left:49.5px;top:349.1px;width:9px;height:0.7px;background:#6a6a6a;"></div>
<div class="abs" style="left:23px;top:351.6px;width:10px;height:0.7px;background:#6a6a6a;"></div>
<div class="abs" style="left:35.5px;top:351.6px;width:11px;height:0.7px;background:#6a6a6a;"></div>
<div class="abs" style="left:49.5px;top:351.6px;width:9px;height:0.7px;background:#6a6a6a;"></div>
<div class="abs" style="left:23px;top:354.1px;width:10px;height:0.7px;background:#6a6a6a;"></div>
<div class="abs" style="left:35.5px;top:354.1px;width:11px;height:0.7px;background:#6a6a6a;"></div>
<div class="abs" style="left:49.5px;top:354.1px;width:9px;height:0.7px;background:#6a6a6a;"></div>
<div class="abs" style="left:23px;top:356.6px;width:10px;height:0.7px;background:#6a6a6a;"></div>
<div class="abs" style="left:35.5px;top:356.6px;width:11px;height:0.7px;background:#6a6a6a;"></div>
<div class="abs" style="left:49.5px;top:356.6px;width:9px;height:0.7px;background:#6a6a6a;"></div>
<div class="abs" style="left:23px;top:359.1px;width:10px;height:0.7px;background:#6a6a6a;"></div>
<div class="abs" style="left:35.5px;top:359.1px;width:11px;height:0.7px;background:#6a6a6a;"></div>
<div class="abs" style="left:49.5px;top:359.1px;width:9px;height:0.7px;background:#6a6a6a;"></div>
<div class="abs" style="left:66.2px;top:354.8px;width:6.4px;height:6.4px;background:#f2b21c;border-radius:50%"></div>
<div class="abs" style="left:67.6px;top:356.6px;width:1.2px;height:1.4px;background:#5a3a10;border-radius:50%"></div>
<div class="abs" style="left:70px;top:356.6px;width:1.2px;height:1.4px;background:#5a3a10;border-radius:50%"></div>
<div class="abs" style="left:34.4px;top:364.4px;width:41.4px;height:4.2px;background:#f9b85c;border-radius:0.6px"></div>
<div class="abs" style="left:36.4px;top:366.2px;width:37px;height:0.7px;background:#7a5a2c;"></div>
<div class="abs" style="left:18.8px;top:385.2px;width:33.8px;height:8.6px;background:#f9b85c;border-radius:0.6px"></div>
<div class="abs" style="left:20.6px;top:386.8px;width:26px;height:0.8px;background:#6a4a1c;"></div>
<div class="abs" style="left:20.6px;top:389.2px;width:30px;height:0.8px;background:#6a4a1c;"></div>
<div class="abs" style="left:20.6px;top:391.4px;width:14px;height:0.8px;background:#6a4a1c;"></div>
<div class="abs" style="left:20.6px;top:396.6px;width:48px;height:0.6px;background:#9a9a9a;"></div>
<div class="abs" style="left:20.6px;top:398.5px;width:22px;height:0.6px;background:#9a9a9a;"></div>
<div class="abs" style="left:20.6px;top:402.3px;width:34px;height:0.6px;background:#9a9a9a;"></div>
<div class="abs" style="left:20.6px;top:406.1px;width:26px;height:0.6px;background:#9a9a9a;"></div>
<div class="abs" style="left:20.6px;top:408.0px;width:46px;height:0.6px;background:#9a9a9a;"></div>
<svg style="left:66px;top:403px" width="13" height="14" viewBox="0 0 13 14"><g fill="none" stroke="#a0a0a0" stroke-width="0.35"><ellipse cx="6.4" cy="7" rx="5.4" ry="2.4" transform="rotate(30 6.4 7)"/><ellipse cx="6.4" cy="7" rx="5.4" ry="2.4" transform="rotate(-35 6.4 7)"/><ellipse cx="6.4" cy="7" rx="2.4" ry="5.6"/><circle cx="6.4" cy="7" r="1.2"/></g></svg>
<div class="abs" style="left:18.8px;top:432.2px;width:30.6px;height:5.4px;background:#f9b85c;border-radius:0.6px"></div>
<div class="abs" style="left:20.6px;top:433.6px;width:26px;height:0.8px;background:#6a4a1c;"></div>
<div class="abs" style="left:20.6px;top:435.8px;width:22px;height:0.8px;background:#6a4a1c;"></div>
</div>
<div class="abs" style="left:154.9px;top:187.9px;width:392.6px;height:230.6px;background:#fff;border:0.6px solid #e2e2e2"></div>
<div class="abs" style="left:155.4px;top:188.4px;width:391.6px;height:229.6px;overflow:hidden"><svg style="left:0px;top:0px" width="391.6" height="229.6" viewBox="0 0 391.5 229.5" preserveAspectRatio="none"><defs><clipPath id="ctr"><path d="M270.5 -0.5C274.8 4.2 289.2 19.5 296.5 27.5C303.8 35.5 310.3 43.1 314.5 47.5C318.7 51.9 317.8 52.6 321.5 54.0C325.2 55.4 331.5 55.8 336.5 56.0C341.5 56.2 347.8 53.8 351.5 55.0C355.2 56.2 356.0 59.1 358.5 63.5C361.0 67.9 363.7 74.7 366.5 81.5C369.3 88.3 373.0 98.7 375.5 104.5C378.0 110.3 378.8 113.8 381.5 116.5C384.2 119.2 389.8 119.8 391.5 120.5L391.5 0Z"/></clipPath><clipPath id="cbl"><path d="M0.0 117.5C1.8 118.5 7.1 120.8 10.5 123.5C13.9 126.2 17.7 129.2 20.5 133.5C23.3 137.8 25.7 144.0 27.5 149.5C29.3 155.0 29.7 160.8 31.5 166.5C33.3 172.2 35.3 178.3 38.5 183.5C41.7 188.7 45.8 194.0 50.5 197.5C55.2 201.0 60.8 202.8 66.5 204.5C72.2 206.2 78.5 206.4 84.5 207.5C90.5 208.6 97.5 209.0 102.5 211.0C107.5 213.0 111.2 217.1 114.5 219.5C117.8 221.9 120.2 223.8 122.5 225.5C124.8 227.2 127.5 228.8 128.5 229.5L0 229.5Z"/></clipPath></defs><g fill="none" stroke="#e17350" stroke-width="0.55" opacity="1.0"><g clip-path="url(#ctr)"><path d="M387.9 0A3.6 3.6 0 0 0 391.5 3.6"/><path d="M384.3 0A7.2 7.2 0 0 0 391.5 7.2"/><path d="M380.7 0A10.8 10.8 0 0 0 391.5 10.8"/><path d="M377.1 0A14.4 14.4 0 0 0 391.5 14.4"/><path d="M373.5 0A18.0 18.0 0 0 0 391.5 18.0"/><path d="M369.9 0A21.6 21.6 0 0 0 391.5 21.6"/><path d="M366.3 0A25.2 25.2 0 0 0 391.5 25.2"/><path d="M362.7 0A28.8 28.8 0 0 0 391.5 28.8"/><path d="M359.1 0A32.4 32.4 0 0 0 391.5 32.4"/><path d="M355.5 0A36.0 36.0 0 0 0 391.5 36.0"/><path d="M351.9 0A39.6 39.6 0 0 0 391.5 39.6"/><path d="M348.3 0A43.2 43.2 0 0 0 391.5 43.2"/><path d="M344.7 0A46.8 46.8 0 0 0 391.5 46.8"/><path d="M341.1 0A50.4 50.4 0 0 0 391.5 50.4"/><path d="M337.5 0A54.0 54.0 0 0 0 391.5 54.0"/><path d="M333.9 0A57.6 57.6 0 0 0 391.5 57.6"/><path d="M330.3 0A61.2 61.2 0 0 0 391.5 61.2"/><path d="M326.7 0A64.8 64.8 0 0 0 391.5 64.8"/><path d="M323.1 0A68.4 68.4 0 0 0 391.5 68.4"/><path d="M319.5 0A72.0 72.0 0 0 0 391.5 72.0"/><path d="M315.9 0A75.6 75.6 0 0 0 391.5 75.6"/><path d="M312.3 0A79.2 79.2 0 0 0 391.5 79.2"/><path d="M308.7 0A82.8 82.8 0 0 0 391.5 82.8"/><path d="M305.1 0A86.4 86.4 0 0 0 391.5 86.4"/><path d="M301.5 0A90.0 90.0 0 0 0 391.5 90.0"/><path d="M297.9 0A93.6 93.6 0 0 0 391.5 93.6"/><path d="M294.3 0A97.2 97.2 0 0 0 391.5 97.2"/><path d="M290.7 0A100.8 100.8 0 0 0 391.5 100.8"/><path d="M287.1 0A104.4 104.4 0 0 0 391.5 104.4"/><path d="M283.5 0A108.0 108.0 0 0 0 391.5 108.0"/><path d="M279.9 0A111.6 111.6 0 0 0 391.5 111.6"/><path d="M276.3 0A115.2 115.2 0 0 0 391.5 115.2"/><path d="M272.7 0A118.8 118.8 0 0 0 391.5 118.8"/><path d="M269.1 0A122.4 122.4 0 0 0 391.5 122.4"/><path d="M265.5 0A126.0 126.0 0 0 0 391.5 126.0"/></g><g clip-path="url(#cbl)"><path d="M0 225.9A4.1 3.6 0 0 1 4.1 229.5"/><path d="M0 222.3A8.3 7.2 0 0 1 8.3 229.5"/><path d="M0 218.7A12.4 10.8 0 0 1 12.4 229.5"/><path d="M0 215.1A16.5 14.4 0 0 1 16.5 229.5"/><path d="M0 211.5A20.7 18.0 0 0 1 20.7 229.5"/><path d="M0 207.9A24.8 21.6 0 0 1 24.8 229.5"/><path d="M0 204.3A28.9 25.2 0 0 1 28.9 229.5"/><path d="M0 200.7A33.0 28.8 0 0 1 33.0 229.5"/><path d="M0 197.1A37.2 32.4 0 0 1 37.2 229.5"/><path d="M0 193.5A41.3 36.0 0 0 1 41.3 229.5"/><path d="M0 189.9A45.4 39.6 0 0 1 45.4 229.5"/><path d="M0 186.3A49.6 43.2 0 0 1 49.6 229.5"/><path d="M0 182.7A53.7 46.8 0 0 1 53.7 229.5"/><path d="M0 179.1A57.8 50.4 0 0 1 57.8 229.5"/><path d="M0 175.5A62.0 54.0 0 0 1 62.0 229.5"/><path d="M0 171.9A66.1 57.6 0 0 1 66.1 229.5"/><path d="M0 168.3A70.2 61.2 0 0 1 70.2 229.5"/><path d="M0 164.7A74.3 64.8 0 0 1 74.3 229.5"/><path d="M0 161.1A78.5 68.4 0 0 1 78.5 229.5"/><path d="M0 157.5A82.6 72.0 0 0 1 82.6 229.5"/><path d="M0 153.9A86.7 75.6 0 0 1 86.7 229.5"/><path d="M0 150.3A90.9 79.2 0 0 1 90.9 229.5"/><path d="M0 146.7A95.0 82.8 0 0 1 95.0 229.5"/><path d="M0 143.1A99.1 86.4 0 0 1 99.1 229.5"/><path d="M0 139.5A103.3 90.0 0 0 1 103.3 229.5"/><path d="M0 135.9A107.4 93.6 0 0 1 107.4 229.5"/><path d="M0 132.3A111.5 97.2 0 0 1 111.5 229.5"/><path d="M0 128.7A115.6 100.8 0 0 1 115.6 229.5"/><path d="M0 125.1A119.8 104.4 0 0 1 119.8 229.5"/><path d="M0 121.5A123.9 108.0 0 0 1 123.9 229.5"/><path d="M0 117.9A128.0 111.6 0 0 1 128.0 229.5"/></g><g stroke-width="0.35"><path d="M270.5 -0.5C272.1 1.2 276.9 6.4 280.2 9.9C283.4 13.4 286.6 16.8 289.8 20.3C293.0 23.8 296.2 27.2 299.4 30.7C302.6 34.2 305.7 37.8 308.9 41.3C312.1 44.7 314.9 49.1 318.8 51.5C322.6 53.8 327.3 54.7 331.9 55.4C336.4 56.0 341.8 54.3 346.0 55.4C350.2 56.4 354.1 58.5 357.0 61.7C359.9 64.8 361.3 70.0 363.3 74.3C365.3 78.6 367.0 83.0 368.8 87.4C370.6 91.8 372.1 96.3 374.0 100.6C375.8 104.9 377.1 110.1 380.0 113.4C382.9 116.8 389.6 119.3 391.5 120.5"/><path d="M274.8 -0.5C276.4 1.2 281.0 6.3 284.1 9.6C287.2 13.0 290.3 16.4 293.3 19.8C296.4 23.2 299.5 26.5 302.6 29.9C305.7 33.3 308.6 36.8 311.8 40.1C314.9 43.5 317.7 47.6 321.4 49.9C325.0 52.3 329.5 53.4 333.9 54.1C338.3 54.9 343.5 53.4 347.5 54.5C351.6 55.5 355.5 57.5 358.3 60.5C361.2 63.6 362.8 68.5 364.7 72.6C366.7 76.7 368.3 81.0 370.0 85.3C371.7 89.5 373.2 93.8 375.0 98.1C376.8 102.3 377.8 107.3 380.6 110.6C383.3 113.8 389.7 116.5 391.5 117.7"/><path d="M279.2 -0.5C280.6 1.1 285.1 6.1 288.0 9.4C291.0 12.7 293.9 16.0 296.9 19.3C299.8 22.6 302.8 25.8 305.8 29.1C308.7 32.4 311.6 35.8 314.6 39.0C317.6 42.2 320.4 46.1 324.0 48.4C327.5 50.7 331.7 52.0 335.9 52.9C340.1 53.8 345.1 52.5 349.1 53.6C353.0 54.7 356.8 56.5 359.7 59.4C362.5 62.3 364.2 66.9 366.1 70.9C368.0 74.8 369.5 79.0 371.2 83.1C372.8 87.2 374.3 91.4 376.0 95.5C377.7 99.6 378.6 104.5 381.1 107.7C383.7 110.9 389.8 113.6 391.5 114.8"/><path d="M283.5 -0.5C284.9 1.1 289.1 5.9 292.0 9.1C294.8 12.3 297.6 15.6 300.4 18.8C303.2 22.0 306.1 25.1 308.9 28.3C311.8 31.5 314.5 34.8 317.5 37.9C320.4 41.0 323.1 44.6 326.5 46.9C330.0 49.2 333.9 50.7 338.0 51.7C342.0 52.6 346.8 51.6 350.6 52.7C354.5 53.8 358.2 55.5 361.0 58.2C363.8 61.0 365.6 65.4 367.5 69.2C369.4 73.0 370.8 77.1 372.4 81.0C374.0 85.0 375.5 89.0 377.0 93.0C378.6 96.9 379.3 101.7 381.7 104.9C384.1 108.0 389.9 110.8 391.5 112.0"/><path d="M287.8 -0.5C289.2 1.1 293.2 5.7 295.9 8.9C298.6 12.0 301.2 15.1 303.9 18.2C306.6 21.4 309.4 24.4 312.1 27.5C314.8 30.6 317.5 33.8 320.3 36.8C323.2 39.7 325.9 43.1 329.1 45.3C332.4 47.6 336.1 49.4 340.0 50.4C343.8 51.5 348.5 50.7 352.2 51.8C355.9 52.9 359.5 54.5 362.3 57.1C365.1 59.7 367.0 63.8 368.9 67.5C370.8 71.1 372.1 75.1 373.6 78.9C375.1 82.7 376.6 86.6 378.0 90.4C379.5 94.3 380.1 98.9 382.3 102.0C384.6 105.1 390.0 108.0 391.5 109.2"/><path d="M292.2 -0.5C293.4 1.0 297.3 5.6 299.8 8.6C302.4 11.7 304.9 14.7 307.5 17.7C310.0 20.8 312.6 23.7 315.3 26.7C317.9 29.7 320.4 32.8 323.2 35.6C325.9 38.5 328.6 41.6 331.7 43.8C334.9 46.1 338.3 48.0 342.0 49.2C345.7 50.4 350.1 49.8 353.8 50.9C357.4 52.1 360.9 53.5 363.6 55.9C366.4 58.4 368.5 62.3 370.3 65.7C372.2 69.2 373.3 73.1 374.8 76.8C376.2 80.5 377.7 84.2 379.1 87.9C380.4 91.6 380.8 96.1 382.9 99.1C385.0 102.2 390.1 105.1 391.5 106.3"/><path d="M296.5 -0.5C297.7 1.0 301.3 5.4 303.8 8.4C306.2 11.3 308.6 14.3 311.0 17.2C313.4 20.2 315.9 23.1 318.4 25.9C320.9 28.8 323.4 31.8 326.0 34.5C328.7 37.2 331.3 40.0 334.3 42.3C337.3 44.5 340.6 46.7 344.1 48.0C347.5 49.3 351.8 48.9 355.3 50.1C358.8 51.2 362.2 52.5 365.0 54.8C367.7 57.1 369.9 60.7 371.7 64.0C373.5 67.3 374.6 71.1 376.0 74.7C377.4 78.2 378.8 81.7 380.1 85.3C381.3 88.9 381.6 93.2 383.5 96.3C385.4 99.3 390.2 102.3 391.5 103.5"/><path d="M38.5 183.5C39.5 184.7 42.6 188.3 44.7 190.7C46.8 193.1 48.5 195.9 51.0 197.7C53.5 199.5 56.8 200.3 59.7 201.5C62.6 202.7 65.5 204.0 68.5 204.8C71.6 205.7 74.8 205.9 77.9 206.4C81.0 206.9 84.1 207.5 87.2 208.0C90.4 208.6 93.6 209.0 96.6 209.8C99.6 210.7 102.6 211.6 105.3 213.0C108.1 214.4 110.5 216.6 113.1 218.5C115.6 220.3 118.1 222.3 120.7 224.1C123.3 226.0 127.2 228.6 128.5 229.5"/><path d="M32.8 182.5C33.9 183.7 37.2 187.2 39.5 189.4C41.7 191.7 43.6 194.4 46.2 196.2C48.8 198.0 52.0 199.0 54.9 200.3C57.8 201.7 60.7 203.1 63.7 204.1C66.7 205.1 69.9 205.6 73.0 206.3C76.1 207.0 79.2 207.8 82.3 208.5C85.4 209.2 88.6 209.8 91.7 210.7C94.7 211.6 97.8 212.5 100.6 213.9C103.5 215.3 106.1 217.3 108.7 219.0C111.4 220.8 114.0 222.6 116.7 224.4C119.4 226.1 123.5 228.6 124.8 229.5"/><path d="M27.2 181.5C28.3 182.6 31.9 186.0 34.2 188.2C36.6 190.4 38.7 192.9 41.4 194.7C44.0 196.6 47.2 197.7 50.1 199.2C53.0 200.6 55.9 202.1 58.9 203.3C61.9 204.5 65.0 205.2 68.1 206.2C71.2 207.1 74.3 208.1 77.4 209.0C80.5 209.9 83.7 210.6 86.8 211.6C89.9 212.6 93.0 213.5 95.9 214.8C98.9 216.1 101.6 217.9 104.4 219.6C107.2 221.2 109.9 223.0 112.7 224.6C115.5 226.3 119.8 228.7 121.2 229.5"/><path d="M21.5 180.5C22.8 181.6 26.5 184.8 29.0 186.9C31.5 189.0 33.9 191.4 36.6 193.2C39.3 195.1 42.4 196.4 45.3 198.0C48.2 199.5 51.1 201.2 54.1 202.6C57.1 203.9 60.2 204.9 63.2 206.1C66.3 207.2 69.4 208.4 72.5 209.4C75.6 210.5 78.8 211.4 81.9 212.5C85.0 213.5 88.2 214.4 91.2 215.7C94.3 217.0 97.2 218.6 100.1 220.1C103.0 221.6 105.8 223.3 108.7 224.9C111.6 226.5 116.0 228.7 117.5 229.5"/><path d="M15.8 179.5C17.2 180.5 21.1 183.6 23.8 185.7C26.4 187.7 29.0 189.9 31.8 191.7C34.6 193.6 37.6 195.1 40.5 196.8C43.4 198.5 46.3 200.3 49.3 201.8C52.3 203.3 55.3 204.6 58.3 206.0C61.4 207.3 64.4 208.7 67.6 209.9C70.7 211.1 73.9 212.2 77.0 213.3C80.2 214.5 83.4 215.4 86.6 216.6C89.7 217.8 92.7 219.2 95.8 220.6C98.8 222.1 101.7 223.7 104.8 225.1C107.8 226.6 112.3 228.8 113.8 229.5"/><path d="M10.2 178.5C11.6 179.5 15.8 182.4 18.6 184.4C21.4 186.3 24.1 188.4 27.0 190.2C29.8 192.1 32.8 193.8 35.7 195.6C38.7 197.4 41.5 199.3 44.5 201.0C47.4 202.7 50.4 204.3 53.5 205.9C56.5 207.4 59.5 209.0 62.6 210.4C65.8 211.8 68.9 213.0 72.1 214.2C75.3 215.4 78.7 216.3 81.9 217.5C85.1 218.7 88.3 219.9 91.4 221.2C94.6 222.5 97.6 224.0 100.8 225.4C103.9 226.8 108.6 228.8 110.2 229.5"/><path d="M4.5 177.5C6.0 178.4 10.4 181.2 13.3 183.1C16.3 185.0 19.2 186.9 22.2 188.7C25.1 190.6 28.0 192.5 30.9 194.5C33.9 196.4 36.7 198.4 39.7 200.3C42.6 202.2 45.6 204.0 48.6 205.8C51.6 207.5 54.6 209.3 57.7 210.8C60.8 212.4 64.0 213.8 67.2 215.1C70.5 216.3 73.9 217.3 77.2 218.4C80.5 219.5 83.8 220.5 87.1 221.7C90.4 222.9 93.6 224.3 96.8 225.6C100.0 226.9 104.9 228.9 106.5 229.5"/></g></g></svg></div>
<div class="abs" style="left:178px;top:196.8px;width:184px;height:26.8px;background:#fbb95f;border-radius:3px"></div>
<span class="t" style="left:184.70px;top:198.97px;font-size:9.2px;font-weight:bold;color:#1e1a14;transform:scaleX(0.9270);transform-origin:0 0;-webkit-text-stroke:0.2px #1e1a14;">HANGI OLAYLAR PSIKOLOJIK TRAVMAYA</span>
<span class="t" style="left:242.80px;top:211.37px;font-size:9.2px;font-weight:bold;color:#1e1a14;transform:scaleX(0.8918);transform-origin:0 0;-webkit-text-stroke:0.2px #1e1a14;">SEBEP OLUR?</span>
<span class="t" style="left:199.60px;top:242.95px;font-size:19px;color:#161616;">•</span>
<span class="t" style="left:205.90px;top:246.10px;font-size:13.9px;color:#161616;transform:scaleX(0.9209);transform-origin:0 0;-webkit-text-stroke:0.28px #161616;">Sevilen bir yakının kaybı,</span>
<span class="t" style="left:199.60px;top:259.16px;font-size:19px;color:#161616;">•</span>
<span class="t" style="left:205.90px;top:262.30px;font-size:13.9px;color:#161616;transform:scaleX(0.9323);transform-origin:0 0;-webkit-text-stroke:0.28px #161616;">Boşanma ya da ayrılıklar,</span>
<span class="t" style="left:199.60px;top:275.56px;font-size:19px;color:#161616;">•</span>
<span class="t" style="left:205.90px;top:278.70px;font-size:13.9px;color:#161616;transform:scaleX(0.9151);transform-origin:0 0;-webkit-text-stroke:0.28px #161616;">Saldırıya uğrama,</span>
<span class="t" style="left:199.60px;top:292.16px;font-size:19px;color:#161616;">•</span>
<span class="t" style="left:205.90px;top:295.30px;font-size:13.9px;color:#161616;transform:scaleX(0.9256);transform-origin:0 0;-webkit-text-stroke:0.28px #161616;">Taciz, tecavüz</span>
<span class="t" style="left:199.60px;top:308.36px;font-size:19px;color:#161616;">•</span>
<span class="t" style="left:205.90px;top:311.50px;font-size:13.9px;color:#161616;transform:scaleX(0.9022);transform-origin:0 0;-webkit-text-stroke:0.28px #161616;">Trafik kazası,</span>
<span class="t" style="left:199.60px;top:325.96px;font-size:19px;color:#161616;">•</span>
<span class="t" style="left:205.90px;top:329.10px;font-size:13.9px;color:#161616;transform:scaleX(0.9630);transform-origin:0 0;-webkit-text-stroke:0.28px #161616;">Doğal afetler</span>
<span class="t" style="left:199.60px;top:345.36px;font-size:19px;color:#161616;">•</span>
<span class="t" style="left:205.90px;top:348.50px;font-size:13.9px;color:#161616;transform:scaleX(0.9427);transform-origin:0 0;-webkit-text-stroke:0.28px #161616;">Travmatik bir olaya tanık olma</span>
<svg style="left:0;top:0" width="1024" height="575" viewBox="0 0 1024 575"><g fill="none" stroke="#383838" stroke-width="0.42"><ellipse cx="455.6" cy="307.7" rx="38.8" ry="44.9" transform="rotate(0 455.6 307.7)"/><ellipse cx="455.8" cy="307.8" rx="35.4" ry="44.0" transform="rotate(12 455.8 307.8)"/><ellipse cx="456.4" cy="308.9" rx="33.2" ry="41.6" transform="rotate(-18 456.4 308.9)"/><ellipse cx="453.8" cy="308.9" rx="31.4" ry="39.1" transform="rotate(25 453.8 308.9)"/><ellipse cx="458.2" cy="309.7" rx="29.3" ry="36.2" transform="rotate(-8 458.2 309.7)"/><ellipse cx="454.1" cy="305.0" rx="27.1" ry="33.1" transform="rotate(15 454.1 305.0)"/><ellipse cx="454.3" cy="306.1" rx="32.1" ry="37.9" transform="rotate(-30 454.3 306.1)"/><ellipse cx="455.5" cy="309.1" rx="37.0" ry="41.3" transform="rotate(35 455.5 309.1)"/><ellipse cx="455.8" cy="308.2" rx="29.9" ry="42.6" transform="rotate(5 455.8 308.2)"/><ellipse cx="458.3" cy="309.9" rx="35.7" ry="39.4" transform="rotate(-12 458.3 309.9)"/></g><g fill="none" stroke="#2c2c2c" stroke-width="0.4"><ellipse cx="453.3" cy="304.4" rx="3.2" ry="2.8"/><ellipse cx="454.0" cy="301.5" rx="4.3" ry="4.1"/><ellipse cx="456.4" cy="302.5" rx="2.6" ry="2.3"/><ellipse cx="455.3" cy="302.2" rx="4.6" ry="4.3"/><ellipse cx="455.8" cy="304.2" rx="4.2" ry="3.8"/><ellipse cx="455.1" cy="304.0" rx="4.5" ry="4.7"/><ellipse cx="454.8" cy="304.1" rx="2.8" ry="2.4"/><ellipse cx="454.1" cy="302.1" rx="3.7" ry="3.6"/><ellipse cx="454.7" cy="305.4" rx="2.9" ry="2.9"/><ellipse cx="455.1" cy="304.4" rx="3.0" ry="2.8"/><ellipse cx="456.3" cy="302.7" rx="3.2" ry="3.4"/></g><path d="M450.4 329.6 Q450 325.6 447.6 324 Q443.6 323.8 440.6 322.6 Q439.2 321 440 319.4 L439.2 318 L439.8 316.4 L438.6 315 L439 313.4 Q437.4 312.6 436 311 Q435.6 310 436.6 309 Q438.4 306.4 438.6 304 Q437.6 300 438.4 296.6 Q440.6 286 453.6 284.4 Q467.4 284.2 470 297 Q471.4 306 466.6 313 Q463.6 318 464.4 322 L465.4 326.2" fill="none" stroke="#141414" stroke-width="1.35" stroke-linecap="round" stroke-linejoin="round"/><path d="M307.6 292.6 L307.6 300.4 L309.4 298.8 L310.8 301.8 L311.8 301.3 L310.5 298.4 L312.8 298.2Z" fill="#fff" stroke="#222" stroke-width="0.6"/></svg>
<div class="abs" style="left:611.2px;top:291.8px;width:3px;height:14.2px;background:#5169a8;border-radius:1px"></div>
<div class="abs" style="left:602.8px;top:185px;width:6.9px;height:238.6px;background:#e9e9e9;"></div>
<div class="abs" style="left:602.8px;top:185px;width:6.9px;height:6px;background:#fdfdfd;"></div>
<svg style="left:604.4px;top:187px" width="4" height="3" viewBox="0 0 4 3"><path d="M0.4 2.4 L2 0.6 L3.6 2.4Z" fill="#666"/></svg>
<div class="abs" style="left:602.8px;top:197.2px;width:6.9px;height:7.4px;background:#fff;border:0.6px solid #c4c4c4"></div>
<div class="abs" style="left:602.8px;top:391.6px;width:6.9px;height:32px;background:#f6f6f6;"></div>
<svg style="left:604.4px;top:393.6px" width="4" height="3" viewBox="0 0 4 3"><path d="M0.4 0.6 L2 2.4 L3.6 0.6Z" fill="#666"/></svg>
<svg style="left:604.4px;top:400px" width="4" height="12" viewBox="0 0 4 12"><path d="M0.6 2.6 L2 1 L3.4 2.6Z M0.6 4.4 L2 2.8 L3.4 4.4Z M0.6 7.6 L2 9.2 L3.4 7.6Z M0.6 9.4 L2 11 L3.4 9.4Z" fill="#666" stroke="#666" stroke-width="0.3"/></svg>
<div class="abs" style="left:98.8px;top:423.8px;width:511.2px;height:1px;background:#dcdcdc;"></div>
<div class="abs" style="left:98.8px;top:424.3px;width:511.2px;height:15.4px;background:#f4f4f4;"></div>
<span class="t" style="left:104.40px;top:429.48px;font-size:6.6px;color:#555;transform:scaleX(0.9987);transform-origin:0 0;">Not eklemek için tıklatın</span>
<div class="abs" style="left:3px;top:439.6px;width:607px;height:10.5px;background:#d24a29;"></div>
<span class="t" style="left:6.60px;top:442.73px;font-size:5px;color:#fbe9e2;transform:scaleX(0.9222);transform-origin:0 0;">SLAYT 2 / 37</span>
<svg style="left:41px;top:441.6px" width="7" height="7" viewBox="0 0 7 7"><path d="M0.8 1 L3 1 L3 5 L0.8 5Z M3.6 1 L5.8 1 L5.8 5 L3.6 5Z" fill="none" stroke="#fbe3da" stroke-width="0.7"/><path d="M2.4 5.4 L3.6 6.4 L5.6 4" fill="none" stroke="#fbe3da" stroke-width="0.6"/></svg>
<svg style="left:371px;top:441.4px" width="8" height="7" viewBox="0 0 8 7"><path d="M1 4.6 L7 4.6 M1.6 6.2 L6.4 6.2 M4 0.6 L4 3.6 M2.8 2.6 L4 3.8 L5.2 2.6" fill="none" stroke="#fbe3da" stroke-width="0.7"/></svg>
<span class="t" style="left:379.80px;top:442.73px;font-size:5px;color:#fbe9e2;transform:scaleX(0.8974);transform-origin:0 0;">NOTLAR</span>
<svg style="left:407.4px;top:441.8px" width="7" height="7" viewBox="0 0 7 7"><path d="M0.6 0.6 L6 0.6 L6 4.4 L3.4 4.4 L2 6 L2 4.4 L0.6 4.4Z" fill="#fbe9e2"/></svg>
<span class="t" style="left:414.80px;top:442.73px;font-size:5px;color:#fbe9e2;transform:scaleX(0.8911);transform-origin:0 0;">AÇIKLAMALAR</span>
<div class="abs" style="left:455px;top:439.6px;width:16px;height:10.6px;background:#b93a1c;"></div>
<svg style="left:455px;top:439.6px" width="160" height="11" viewBox="0 0 160 11"><rect x="5.4" y="2.4" width="5.4" height="5.6" fill="none" stroke="#fbe9e2" stroke-width="0.8"/><rect x="5.4" y="2.4" width="2" height="5.6" fill="#fbe9e2"/><rect x="8.4" y="3.6" width="1.8" height="1.2" fill="#fbe9e2"/><g fill="#fbe9e2"><rect x="22" y="2.4" width="2.2" height="2.2"/><rect x="25.2" y="2.4" width="2.2" height="2.2"/><rect x="22" y="5.6" width="2.2" height="2.2"/><rect x="25.2" y="5.6" width="2.2" height="2.2"/></g><path d="M38.6 2.6 Q40.4 2 41.6 3 Q42.8 2 44.6 2.6 L44.6 7.4 Q42.8 6.8 41.6 7.8 Q40.4 6.8 38.6 7.4Z M41.6 3 L41.6 7.8" fill="none" stroke="#fbe9e2" stroke-width="0.7"/><path d="M55.4 2.4 L62 2.4 M56 2.6 L56 6 L61.4 6 L61.4 2.6 M58.7 6 L58.7 7.4 M57.2 8.6 L58.7 7.2 L60.2 8.6" fill="none" stroke="#fbe9e2" stroke-width="0.7"/><rect x="70" y="5" width="2.6" height="0.8" fill="#fbe9e2"/><rect x="74.8" y="5.1" width="45" height="0.6" fill="#f3c4b4"/><rect x="83.6" y="2.6" width="1.4" height="5.6" fill="#fff"/><rect x="97" y="3.8" width="0.6" height="3.2" fill="#f3c4b4"/><path d="M121 5.4 L124 5.4 M122.5 3.9 L122.5 6.9" stroke="#fbe9e2" stroke-width="0.8"/><path d="M146.4 2.4 L151.6 2.4 L151.6 8 L146.4 8Z M147.4 3.4 L150.6 7 M150.6 3.4 L147.4 7" fill="none" stroke="#fbe9e2" stroke-width="0.7"/></svg>
<span class="t" style="left:585.60px;top:442.73px;font-size:5px;color:#fbe9e2;transform:scaleX(0.9393);transform-origin:0 0;">%46</span>
</div>
<div class="abs" style="left:632px;top:119.2px;width:375.4px;height:329px;background:#222222;border-radius:4px"></div>
<div class="abs" style="left:631.7px;top:118.90px;width:94.8px;height:55.83px;border-radius:4px 0 0 0;overflow:hidden;background:linear-gradient(to right,#cfcac0,#c4bfb3)"><svg style="left:0;top:0;filter:blur(0.55px)" width="95" height="56" viewBox="0 0 95 56"><defs><radialGradient id="fc" cx="42%" cy="45%" r="60%"><stop offset="0" stop-color="#ab7a68"/><stop offset="0.6" stop-color="#905f4f"/><stop offset="1" stop-color="#623d30"/></radialGradient></defs><g><rect x="62" y="28" width="33" height="28" fill="#bab5aa" opacity="0.55"/><path d="M16 58 L18 47 Q20 34 29 29.5 L36 27 L57 24.5 L58.6 21 Q66 18 69.4 23 L72.6 33 Q80 42 83 50 L85 58Z" fill="#1b1f2a"/><path d="M60 23.6 Q66 21.4 68.4 25.6 L70.6 36 L62 41Z" fill="#30343f"/><path d="M22 44 Q26 34 34 31 L34 44Z" fill="#262a36"/><path d="M35 58 L36.6 43 L57 43 L60.6 58Z" fill="#26252c"/><path d="M40.6 39 L53 39 L54.4 48.6 Q47 52.6 39.6 48.6Z" fill="#875a4a"/><ellipse cx="46.4" cy="21.4" rx="13.4" ry="20" fill="url(#fc)"/><path d="M33 20 Q32 3.4 46 1.6 Q60.4 2.6 59.8 21 Q57.6 8.6 46 7 Q35.4 8 33 20Z" fill="#43322d" opacity="0.9"/><ellipse cx="40.4" cy="19.6" rx="3.3" ry="1.6" fill="#33201c" opacity="0.85"/><ellipse cx="52.4" cy="19.6" rx="3.3" ry="1.6" fill="#33201c" opacity="0.85"/><path d="M37 16.6 L43.6 16.2 M49.4 16.2 L56 16.6" stroke="#4a332c" stroke-width="1" opacity="0.7"/><path d="M45.4 21 L44.2 27.6 L49.4 27.6" fill="none" stroke="#74483b" stroke-width="1.3" opacity="0.75"/><path d="M40.4 31.4 Q46.4 35 52.8 31.2" fill="none" stroke="#562e27" stroke-width="1.6" opacity="0.85"/><ellipse cx="46.4" cy="37.4" rx="7.4" ry="3.2" fill="#80534400" opacity="0.5"/><ellipse cx="38" cy="26" rx="3" ry="4.4" fill="#b98876" opacity="0.5"/></g></svg><div class="abs" style="left:0;top:0;right:0;bottom:0;border:1.4px solid #3fcaa0;border-radius:4px 0 0 0"></div></div>
<div class="abs" style="left:714px;top:122.3px;width:11px;height:11.4px;background:#1b74e8;border-radius:1.5px"></div>
<svg style="left:716.5px;top:127px" width="6" height="2" viewBox="0 0 6 2"><circle cx="0.7" cy="1" r="0.55" fill="#fff"/><circle cx="3" cy="1" r="0.55" fill="#fff"/><circle cx="5.3" cy="1" r="0.55" fill="#fff"/></svg>
<div class="abs" style="left:633.5px;top:163.2px;width:54px;height:9.6px;background:rgba(38,38,38,.78);border-radius:2px"></div>
<span class="t" style="left:635.20px;top:164.41px;font-size:7px;color:#ececec;transform:scaleX(0.9080);transform-origin:0 0;">MELİKGAZİ RAM</span>
<span class="t" style="left:757.23px;top:142.48px;font-size:8.3px;font-weight:bold;color:#fff;transform:scaleX(0.9824);transform-origin:0 0;">Toplantı</span>
<div class="abs" style="left:727.6px;top:163.2px;width:37.5px;height:10.2px;background:rgba(46,46,46,.9);border-radius:2px"></div>
<svg style="left:728.5px;top:163.8px" width="8" height="9" viewBox="0 0 8 9"><rect x="2.9" y="0.6" width="2.6" height="4.6" rx="1.3" fill="#e5464e"/><path d="M1.7 3.9 Q1.7 6.5 4.2 6.5 Q6.7 6.5 6.7 3.9" fill="none" stroke="#e5464e" stroke-width="0.8"/><path d="M4.2 6.5 L4.2 8.2 M2.8 8.3 L5.6 8.3" stroke="#e5464e" stroke-width="0.8"/><path d="M0.8 8.2 L7.4 0.6" stroke="#e5464e" stroke-width="1"/></svg>
<span class="t" style="left:738.85px;top:165.65px;font-size:7.1px;color:#ebebeb;transform:scaleX(0.9611);transform-origin:0 0;">Toplantı</span>
<div class="abs" style="left:819.7px;top:119.2px;width:93.85px;height:54.83px;background:#060a04;"></div>
<div class="abs" style="left:821.5px;top:163.2px;width:92.2px;height:10.2px;background:rgba(46,46,46,.9);border-radius:2px"></div>
<svg style="left:822.3px;top:163.8px" width="8" height="9" viewBox="0 0 8 9"><rect x="2.9" y="0.6" width="2.6" height="4.6" rx="1.3" fill="#e5464e"/><path d="M1.7 3.9 Q1.7 6.5 4.2 6.5 Q6.7 6.5 6.7 3.9" fill="none" stroke="#e5464e" stroke-width="0.8"/><path d="M4.2 6.5 L4.2 8.2 M2.8 8.3 L5.6 8.3" stroke="#e5464e" stroke-width="0.8"/><path d="M0.8 8.2 L7.4 0.6" stroke="#e5464e" stroke-width="1"/></svg>
<span class="t" style="left:832.70px;top:165.65px;font-size:7.1px;color:#ebebeb;transform:scaleX(0.9033);transform-origin:0 0;">AĞIRNAS OSMAN YÜCE...</span>
<span class="t" style="left:925.37px;top:142.48px;font-size:8.3px;font-weight:bold;color:#fff;transform:scaleX(0.9169);transform-origin:0 0;">Emine  Gönen  Or...</span>
<div class="abs" style="left:915.3px;top:163.2px;width:92.2px;height:10.2px;background:rgba(46,46,46,.9);border-radius:2px"></div>
<svg style="left:916.1px;top:163.8px" width="8" height="9" viewBox="0 0 8 9"><rect x="2.9" y="0.6" width="2.6" height="4.6" rx="1.3" fill="#e5464e"/><path d="M1.7 3.9 Q1.7 6.5 4.2 6.5 Q6.7 6.5 6.7 3.9" fill="none" stroke="#e5464e" stroke-width="0.8"/><path d="M4.2 6.5 L4.2 8.2 M2.8 8.3 L5.6 8.3" stroke="#e5464e" stroke-width="0.8"/><path d="M0.8 8.2 L7.4 0.6" stroke="#e5464e" stroke-width="1"/></svg>
<span class="t" style="left:926.55px;top:165.65px;font-size:7.1px;color:#ebebeb;transform:scaleX(0.9541);transform-origin:0 0;">Emine Gönen Ortaokulu ...</span>
<span class="t" style="left:645.67px;top:197.31px;font-size:8.3px;font-weight:bold;color:#fff;transform:scaleX(0.9145);transform-origin:0 0;">Şerife YOĞURTCU</span>
<div class="abs" style="left:633.8px;top:218.03px;width:67.8px;height:10.2px;background:rgba(46,46,46,.9);border-radius:2px"></div>
<svg style="left:634.6px;top:218.63px" width="8" height="9" viewBox="0 0 8 9"><rect x="2.9" y="0.6" width="2.6" height="4.6" rx="1.3" fill="#e5464e"/><path d="M1.7 3.9 Q1.7 6.5 4.2 6.5 Q6.7 6.5 6.7 3.9" fill="none" stroke="#e5464e" stroke-width="0.8"/><path d="M4.2 6.5 L4.2 8.2 M2.8 8.3 L5.6 8.3" stroke="#e5464e" stroke-width="0.8"/><path d="M0.8 8.2 L7.4 0.6" stroke="#e5464e" stroke-width="1"/></svg>
<span class="t" style="left:645.00px;top:220.48px;font-size:7.1px;color:#ebebeb;transform:scaleX(0.8901);transform-origin:0 0;">Şerife YOĞURTCU</span>
<span class="t" style="left:758.77px;top:197.31px;font-size:8.3px;font-weight:bold;color:#fff;transform:scaleX(1.0109);transform-origin:0 0;">123456</span>
<div class="abs" style="left:727.6px;top:218.03px;width:35.6px;height:10.2px;background:rgba(46,46,46,.9);border-radius:2px"></div>
<svg style="left:728.5px;top:218.63px" width="8" height="9" viewBox="0 0 8 9"><rect x="2.9" y="0.6" width="2.6" height="4.6" rx="1.3" fill="#e5464e"/><path d="M1.7 3.9 Q1.7 6.5 4.2 6.5 Q6.7 6.5 6.7 3.9" fill="none" stroke="#e5464e" stroke-width="0.8"/><path d="M4.2 6.5 L4.2 8.2 M2.8 8.3 L5.6 8.3" stroke="#e5464e" stroke-width="0.8"/><path d="M0.8 8.2 L7.4 0.6" stroke="#e5464e" stroke-width="1"/></svg>
<span class="t" style="left:738.85px;top:220.48px;font-size:7.1px;color:#ebebeb;transform:scaleX(0.9285);transform-origin:0 0;">123456</span>
<span class="t" style="left:832.27px;top:197.31px;font-size:8.3px;font-weight:bold;color:#fff;transform:scaleX(0.9311);transform-origin:0 0;">Atilla  ÖZMERCA...</span>
<div class="abs" style="left:821.5px;top:218.03px;width:92.2px;height:10.2px;background:rgba(46,46,46,.9);border-radius:2px"></div>
<svg style="left:822.3px;top:218.63px" width="8" height="9" viewBox="0 0 8 9"><rect x="2.9" y="0.6" width="2.6" height="4.6" rx="1.3" fill="#e5464e"/><path d="M1.7 3.9 Q1.7 6.5 4.2 6.5 Q6.7 6.5 6.7 3.9" fill="none" stroke="#e5464e" stroke-width="0.8"/><path d="M4.2 6.5 L4.2 8.2 M2.8 8.3 L5.6 8.3" stroke="#e5464e" stroke-width="0.8"/><path d="M0.8 8.2 L7.4 0.6" stroke="#e5464e" stroke-width="1"/></svg>
<span class="t" style="left:832.70px;top:220.48px;font-size:7.1px;color:#ebebeb;transform:scaleX(0.9221);transform-origin:0 0;">Atilla ÖZMERCAN ŞEHİT...</span>
<div class="abs" style="left:939.5px;top:180.33px;width:42px;height:42.2px;background:#3b7d28;border-radius:4px"></div>
<span class="t" style="left:952.47px;top:189.81px;font-size:24px;color:#fff;transform:scaleX(1.0000);transform-origin:0 0;">Y</span>
<div class="abs" style="left:915.3px;top:218.03px;width:81.4px;height:10.2px;background:rgba(46,46,46,.9);border-radius:2px"></div>
<svg style="left:916.1px;top:218.63px" width="8" height="9" viewBox="0 0 8 9"><rect x="2.9" y="0.6" width="2.6" height="4.6" rx="1.3" fill="#e5464e"/><path d="M1.7 3.9 Q1.7 6.5 4.2 6.5 Q6.7 6.5 6.7 3.9" fill="none" stroke="#e5464e" stroke-width="0.8"/><path d="M4.2 6.5 L4.2 8.2 M2.8 8.3 L5.6 8.3" stroke="#e5464e" stroke-width="0.8"/><path d="M0.8 8.2 L7.4 0.6" stroke="#e5464e" stroke-width="1"/></svg>
<span class="t" style="left:926.55px;top:220.48px;font-size:7.1px;color:#ebebeb;transform:scaleX(0.8634);transform-origin:0 0;">YAHYA KEMAL BEYATLI</span>
<div class="abs" style="left:657.9px;top:235.16px;width:42px;height:42.2px;background:#1464b4;border-radius:4px"></div>
<span class="t" style="left:672.25px;top:242.14px;font-size:24px;color:#fff;transform:scaleX(1.0000);transform-origin:0 0;">g</span>
<div class="abs" style="left:633.8px;top:272.86px;width:75.9px;height:10.2px;background:rgba(46,46,46,.9);border-radius:2px"></div>
<svg style="left:634.6px;top:273.46000000000004px" width="8" height="9" viewBox="0 0 8 9"><rect x="2.9" y="0.6" width="2.6" height="4.6" rx="1.3" fill="#e5464e"/><path d="M1.7 3.9 Q1.7 6.5 4.2 6.5 Q6.7 6.5 6.7 3.9" fill="none" stroke="#e5464e" stroke-width="0.8"/><path d="M4.2 6.5 L4.2 8.2 M2.8 8.3 L5.6 8.3" stroke="#e5464e" stroke-width="0.8"/><path d="M0.8 8.2 L7.4 0.6" stroke="#e5464e" stroke-width="1"/></svg>
<span class="t" style="left:645.00px;top:275.31px;font-size:7.1px;color:#ebebeb;transform:scaleX(0.9253);transform-origin:0 0;">ERHAN AHMET İNCİ</span>
<div class="abs" style="left:751.8px;top:235.16px;width:42px;height:42.5px;border-radius:4px;overflow:hidden;background:#6f6a2c"><svg style="left:0;top:0;filter:blur(0.5px)" width="42" height="43" viewBox="0 0 42 43"><rect x="-2" y="-2" width="46" height="47" fill="#6b6729"/><g><ellipse cx="10.7" cy="15.4" rx="4.8" ry="4.4" fill="#8c8a3a" transform="rotate(166 21 21)"/><ellipse cx="1.2" cy="20.0" rx="5.8" ry="3.8" fill="#3e4618" transform="rotate(40 21 21)"/><ellipse cx="15.6" cy="37.3" rx="3.5" ry="1.9" fill="#565f1f" transform="rotate(63 21 21)"/><ellipse cx="30.7" cy="17.6" rx="2.7" ry="4.5" fill="#8a8236" transform="rotate(99 21 21)"/><ellipse cx="32.0" cy="3.1" rx="4.5" ry="3.1" fill="#7b7a30" transform="rotate(33 21 21)"/><ellipse cx="40.8" cy="0.2" rx="5.1" ry="4.9" fill="#8a8236" transform="rotate(42 21 21)"/><ellipse cx="12.2" cy="41.3" rx="4.2" ry="3.9" fill="#7b7a30" transform="rotate(52 21 21)"/><ellipse cx="39.5" cy="29.7" rx="5.9" ry="4.6" fill="#7b7a30" transform="rotate(76 21 21)"/><ellipse cx="15.2" cy="7.1" rx="2.6" ry="1.7" fill="#8a8236" transform="rotate(77 21 21)"/><ellipse cx="24.6" cy="25.6" rx="4.8" ry="1.7" fill="#8c8a3a" transform="rotate(90 21 21)"/><ellipse cx="20.2" cy="13.6" rx="3.9" ry="4.0" fill="#9a9040" transform="rotate(14 21 21)"/><ellipse cx="41.0" cy="1.0" rx="5.0" ry="4.5" fill="#9a9040" transform="rotate(4 21 21)"/><ellipse cx="33.1" cy="15.7" rx="4.3" ry="1.5" fill="#3e4618" transform="rotate(11 21 21)"/><ellipse cx="26.2" cy="41.0" rx="2.5" ry="2.4" fill="#7b7a30" transform="rotate(118 21 21)"/><ellipse cx="21.5" cy="38.4" rx="3.0" ry="3.1" fill="#4a5220" transform="rotate(150 21 21)"/><ellipse cx="36.1" cy="1.6" rx="5.8" ry="1.8" fill="#4a5220" transform="rotate(87 21 21)"/><ellipse cx="25.7" cy="39.5" rx="3.4" ry="4.7" fill="#3e4618" transform="rotate(139 21 21)"/><ellipse cx="13.1" cy="13.6" rx="2.7" ry="1.8" fill="#565f1f" transform="rotate(38 21 21)"/><ellipse cx="41.9" cy="6.9" rx="2.2" ry="5.0" fill="#9a9040" transform="rotate(136 21 21)"/><ellipse cx="1.3" cy="31.8" rx="3.4" ry="2.4" fill="#6e7228" transform="rotate(166 21 21)"/><ellipse cx="6.1" cy="42.1" rx="4.6" ry="4.3" fill="#6e7228" transform="rotate(85 21 21)"/><ellipse cx="5.5" cy="31.5" rx="5.8" ry="3.7" fill="#7d8a3a" transform="rotate(105 21 21)"/><ellipse cx="7.1" cy="16.0" rx="2.2" ry="3.0" fill="#565f1f" transform="rotate(36 21 21)"/><ellipse cx="38.7" cy="26.7" rx="2.7" ry="3.3" fill="#a39a4a" transform="rotate(124 21 21)"/><ellipse cx="20.1" cy="12.5" rx="3.6" ry="2.0" fill="#4a5220" transform="rotate(96 21 21)"/><ellipse cx="40.3" cy="27.0" rx="4.0" ry="2.7" fill="#3e4618" transform="rotate(22 21 21)"/><ellipse cx="11.4" cy="33.6" rx="5.5" ry="2.8" fill="#a39a4a" transform="rotate(91 21 21)"/><ellipse cx="27.9" cy="32.7" rx="3.5" ry="4.0" fill="#8c8a3a" transform="rotate(71 21 21)"/><ellipse cx="11.1" cy="42.2" rx="4.9" ry="4.8" fill="#a39a4a" transform="rotate(87 21 21)"/><ellipse cx="24.4" cy="0.5" rx="4.2" ry="2.4" fill="#7b7a30" transform="rotate(171 21 21)"/><ellipse cx="19.4" cy="35.1" rx="4.6" ry="4.3" fill="#9a9040" transform="rotate(89 21 21)"/><ellipse cx="27.1" cy="31.7" rx="5.3" ry="2.7" fill="#9a9040" transform="rotate(44 21 21)"/><ellipse cx="41.0" cy="41.1" rx="4.1" ry="3.4" fill="#a39a4a" transform="rotate(42 21 21)"/><ellipse cx="35.1" cy="40.3" rx="3.9" ry="3.9" fill="#7d8a3a" transform="rotate(171 21 21)"/><ellipse cx="7.2" cy="33.6" rx="4.3" ry="3.8" fill="#6e7228" transform="rotate(107 21 21)"/><ellipse cx="26.2" cy="33.3" rx="4.5" ry="4.0" fill="#9a9040" transform="rotate(7 21 21)"/><ellipse cx="6.7" cy="19.0" rx="4.6" ry="2.3" fill="#7d8a3a" transform="rotate(175 21 21)"/><ellipse cx="26.5" cy="1.8" rx="3.9" ry="2.3" fill="#7b7a30" transform="rotate(13 21 21)"/><path d="M0 11 L7 9 L12 17 L4 26 L0 26Z" fill="#a7aa93"/><path d="M0 25 Q6 19 14 22 L21 30 L23 43 L0 43Z" fill="#b4bcb9"/><path d="M4 30 L12 27 L14 43 L6 43Z" fill="#c9cfcd"/><ellipse cx="20" cy="20.5" rx="5.4" ry="7" fill="#b38d6e" transform="rotate(16 20 20.5)"/><path d="M15 15.5 Q19.4 10.6 25.4 14.4 L25.4 17.6 Q20.4 14.6 15.4 18Z" fill="#4b3a28"/><path d="M15 23 Q17.6 29 23 26 L24.4 21.6 Q20.4 25.4 15 23Z" fill="#4a3626"/><path d="M22 30 L27 35 L25 43 L20 43Z" fill="#48463a"/></g></svg></div>
<div class="abs" style="left:727.6px;top:272.86px;width:92.2px;height:10.2px;background:rgba(46,46,46,.9);border-radius:2px"></div>
<svg style="left:728.5px;top:273.46000000000004px" width="8" height="9" viewBox="0 0 8 9"><rect x="2.9" y="0.6" width="2.6" height="4.6" rx="1.3" fill="#e5464e"/><path d="M1.7 3.9 Q1.7 6.5 4.2 6.5 Q6.7 6.5 6.7 3.9" fill="none" stroke="#e5464e" stroke-width="0.8"/><path d="M4.2 6.5 L4.2 8.2 M2.8 8.3 L5.6 8.3" stroke="#e5464e" stroke-width="0.8"/><path d="M0.8 8.2 L7.4 0.6" stroke="#e5464e" stroke-width="1"/></svg>
<span class="t" style="left:738.85px;top:275.31px;font-size:7.1px;color:#ebebeb;transform:scaleX(0.9574);transform-origin:0 0;">Özkar Özel Eğitim Uygul...</span>
<span class="t" style="left:833.88px;top:252.14px;font-size:8.3px;font-weight:bold;color:#fff;transform:scaleX(0.9552);transform-origin:0 0;">50.YIL DEDEMAN</span>
<div class="abs" style="left:821.5px;top:272.86px;width:64.9px;height:10.2px;background:rgba(46,46,46,.9);border-radius:2px"></div>
<svg style="left:822.3px;top:273.46000000000004px" width="8" height="9" viewBox="0 0 8 9"><rect x="2.9" y="0.6" width="2.6" height="4.6" rx="1.3" fill="#e5464e"/><path d="M1.7 3.9 Q1.7 6.5 4.2 6.5 Q6.7 6.5 6.7 3.9" fill="none" stroke="#e5464e" stroke-width="0.8"/><path d="M4.2 6.5 L4.2 8.2 M2.8 8.3 L5.6 8.3" stroke="#e5464e" stroke-width="0.8"/><path d="M0.8 8.2 L7.4 0.6" stroke="#e5464e" stroke-width="1"/></svg>
<span class="t" style="left:832.70px;top:275.31px;font-size:7.1px;color:#ebebeb;transform:scaleX(0.8884);transform-origin:0 0;">50.YIL DEDEMAN</span>
<span class="t" style="left:933.47px;top:252.14px;font-size:8.3px;font-weight:bold;color:#fff;transform:scaleX(0.9499);transform-origin:0 0;">figen iPhone&#x27;u</span>
<div class="abs" style="left:915.3px;top:272.86px;width:48.5px;height:10.2px;background:rgba(46,46,46,.9);border-radius:2px"></div>
<span class="t" style="left:916.75px;top:275.31px;font-size:7.1px;color:#ebebeb;transform:scaleX(0.9803);transform-origin:0 0;">figen iPhone&#x27;u</span>
<span class="t" style="left:647.38px;top:306.97px;font-size:8.3px;font-weight:bold;color:#fff;transform:scaleX(0.9121);transform-origin:0 0;">ŞEHİT  CENNET...</span>
<div class="abs" style="left:633.8px;top:327.69px;width:90.5px;height:10.2px;background:rgba(46,46,46,.9);border-radius:2px"></div>
<svg style="left:634.6px;top:328.29px" width="8" height="9" viewBox="0 0 8 9"><rect x="2.9" y="0.6" width="2.6" height="4.6" rx="1.3" fill="#e5464e"/><path d="M1.7 3.9 Q1.7 6.5 4.2 6.5 Q6.7 6.5 6.7 3.9" fill="none" stroke="#e5464e" stroke-width="0.8"/><path d="M4.2 6.5 L4.2 8.2 M2.8 8.3 L5.6 8.3" stroke="#e5464e" stroke-width="0.8"/><path d="M0.8 8.2 L7.4 0.6" stroke="#e5464e" stroke-width="1"/></svg>
<span class="t" style="left:645.00px;top:330.14px;font-size:7.1px;color:#ebebeb;transform:scaleX(0.8873);transform-origin:0 0;">ŞEHİT CENNET YİĞİT İHO</span>
<span class="t" style="left:739.82px;top:306.97px;font-size:8.3px;font-weight:bold;color:#fff;transform:scaleX(0.8967);transform-origin:0 0;">Şehit  Akın  Sevli...</span>
<div class="abs" style="left:727.6px;top:327.69px;width:92.2px;height:10.2px;background:rgba(46,46,46,.9);border-radius:2px"></div>
<svg style="left:728.5px;top:328.29px" width="8" height="9" viewBox="0 0 8 9"><rect x="2.9" y="0.6" width="2.6" height="4.6" rx="1.3" fill="#e5464e"/><path d="M1.7 3.9 Q1.7 6.5 4.2 6.5 Q6.7 6.5 6.7 3.9" fill="none" stroke="#e5464e" stroke-width="0.8"/><path d="M4.2 6.5 L4.2 8.2 M2.8 8.3 L5.6 8.3" stroke="#e5464e" stroke-width="0.8"/><path d="M0.8 8.2 L7.4 0.6" stroke="#e5464e" stroke-width="1"/></svg>
<span class="t" style="left:738.85px;top:330.14px;font-size:7.1px;color:#ebebeb;transform:scaleX(0.9599);transform-origin:0 0;">Şehit Akın Sevli Ortaokulu</span>
<span class="t" style="left:833.12px;top:306.97px;font-size:8.3px;font-weight:bold;color:#fff;transform:scaleX(0.9435);transform-origin:0 0;">ALİ TÜRKER/SU...</span>
<div class="abs" style="left:821.5px;top:327.69px;width:92.2px;height:10.2px;background:rgba(46,46,46,.9);border-radius:2px"></div>
<svg style="left:822.3px;top:328.29px" width="8" height="9" viewBox="0 0 8 9"><rect x="2.9" y="0.6" width="2.6" height="4.6" rx="1.3" fill="#e5464e"/><path d="M1.7 3.9 Q1.7 6.5 4.2 6.5 Q6.7 6.5 6.7 3.9" fill="none" stroke="#e5464e" stroke-width="0.8"/><path d="M4.2 6.5 L4.2 8.2 M2.8 8.3 L5.6 8.3" stroke="#e5464e" stroke-width="0.8"/><path d="M0.8 8.2 L7.4 0.6" stroke="#e5464e" stroke-width="1"/></svg>
<span class="t" style="left:832.70px;top:330.14px;font-size:7.1px;color:#ebebeb;transform:scaleX(0.9078);transform-origin:0 0;">ALİ TÜRKER/SULTAN AL...</span>
<div class="abs" style="left:939.5px;top:289.99px;width:42px;height:42.2px;background:#8a56cf;border-radius:4px"></div>
<span class="t" style="left:950.89px;top:300.12px;font-size:23px;color:#fff;transform:scaleX(1.0000);transform-origin:0 0;">M</span>
<div class="abs" style="left:915.3px;top:327.69px;width:91.6px;height:10.2px;background:rgba(46,46,46,.9);border-radius:2px"></div>
<svg style="left:916.1px;top:328.29px" width="8" height="9" viewBox="0 0 8 9"><rect x="2.9" y="0.6" width="2.6" height="4.6" rx="1.3" fill="#e5464e"/><path d="M1.7 3.9 Q1.7 6.5 4.2 6.5 Q6.7 6.5 6.7 3.9" fill="none" stroke="#e5464e" stroke-width="0.8"/><path d="M4.2 6.5 L4.2 8.2 M2.8 8.3 L5.6 8.3" stroke="#e5464e" stroke-width="0.8"/><path d="M0.8 8.2 L7.4 0.6" stroke="#e5464e" stroke-width="1"/></svg>
<span class="t" style="left:926.55px;top:330.14px;font-size:7.1px;color:#ebebeb;transform:scaleX(0.9595);transform-origin:0 0;">Burhan Dinçbal Orta Ok...</span>
<span class="t" style="left:651.32px;top:361.80px;font-size:8.3px;font-weight:bold;color:#fff;transform:scaleX(0.9278);transform-origin:0 0;">CANSU YAKUT</span>
<div class="abs" style="left:633.8px;top:382.52px;width:57.6px;height:10.2px;background:rgba(46,46,46,.9);border-radius:2px"></div>
<svg style="left:634.6px;top:383.12px" width="8" height="9" viewBox="0 0 8 9"><rect x="2.9" y="0.6" width="2.6" height="4.6" rx="1.3" fill="#e5464e"/><path d="M1.7 3.9 Q1.7 6.5 4.2 6.5 Q6.7 6.5 6.7 3.9" fill="none" stroke="#e5464e" stroke-width="0.8"/><path d="M4.2 6.5 L4.2 8.2 M2.8 8.3 L5.6 8.3" stroke="#e5464e" stroke-width="0.8"/><path d="M0.8 8.2 L7.4 0.6" stroke="#e5464e" stroke-width="1"/></svg>
<span class="t" style="left:645.00px;top:384.97px;font-size:7.1px;color:#ebebeb;transform:scaleX(0.8828);transform-origin:0 0;">CANSU YAKUT</span>
<span class="t" style="left:737.48px;top:361.80px;font-size:8.3px;font-weight:bold;color:#fff;transform:scaleX(0.9507);transform-origin:0 0;">Mimarsinan  şehi...</span>
<div class="abs" style="left:727.6px;top:382.52px;width:92.2px;height:10.2px;background:rgba(46,46,46,.9);border-radius:2px"></div>
<svg style="left:728.5px;top:383.12px" width="8" height="9" viewBox="0 0 8 9"><rect x="2.9" y="0.6" width="2.6" height="4.6" rx="1.3" fill="#e5464e"/><path d="M1.7 3.9 Q1.7 6.5 4.2 6.5 Q6.7 6.5 6.7 3.9" fill="none" stroke="#e5464e" stroke-width="0.8"/><path d="M4.2 6.5 L4.2 8.2 M2.8 8.3 L5.6 8.3" stroke="#e5464e" stroke-width="0.8"/><path d="M0.8 8.2 L7.4 0.6" stroke="#e5464e" stroke-width="1"/></svg>
<span class="t" style="left:738.85px;top:384.97px;font-size:7.1px;color:#ebebeb;transform:scaleX(0.9618);transform-origin:0 0;">Mimarsinan şehit mustaf...</span>
<div class="abs" style="left:845.6px;top:344.82px;width:42px;height:42.2px;background:#69a63b;border-radius:4px"></div>
<span class="t" style="left:858.50px;top:355.78px;font-size:22.5px;color:#fff;transform:scaleX(1.0000);transform-origin:0 0;">N</span>
<div class="abs" style="left:821.5px;top:382.52px;width:38.2px;height:10.2px;background:rgba(46,46,46,.9);border-radius:2px"></div>
<svg style="left:822.3px;top:383.12px" width="8" height="9" viewBox="0 0 8 9"><rect x="2.9" y="0.6" width="2.6" height="4.6" rx="1.3" fill="#e5464e"/><path d="M1.7 3.9 Q1.7 6.5 4.2 6.5 Q6.7 6.5 6.7 3.9" fill="none" stroke="#e5464e" stroke-width="0.8"/><path d="M4.2 6.5 L4.2 8.2 M2.8 8.3 L5.6 8.3" stroke="#e5464e" stroke-width="0.8"/><path d="M0.8 8.2 L7.4 0.6" stroke="#e5464e" stroke-width="1"/></svg>
<span class="t" style="left:832.70px;top:384.97px;font-size:7.1px;color:#ebebeb;transform:scaleX(0.9306);transform-origin:0 0;">Nur Sarı</span>
<span class="t" style="left:925.57px;top:361.80px;font-size:8.3px;font-weight:bold;color:#fff;transform:scaleX(0.9115);transform-origin:0 0;">Derviş  Güneş  Or...</span>
<div class="abs" style="left:915.3px;top:382.52px;width:85.8px;height:10.2px;background:rgba(46,46,46,.9);border-radius:2px"></div>
<svg style="left:916.1px;top:383.12px" width="8" height="9" viewBox="0 0 8 9"><rect x="2.9" y="0.6" width="2.6" height="4.6" rx="1.3" fill="#e5464e"/><path d="M1.7 3.9 Q1.7 6.5 4.2 6.5 Q6.7 6.5 6.7 3.9" fill="none" stroke="#e5464e" stroke-width="0.8"/><path d="M4.2 6.5 L4.2 8.2 M2.8 8.3 L5.6 8.3" stroke="#e5464e" stroke-width="0.8"/><path d="M0.8 8.2 L7.4 0.6" stroke="#e5464e" stroke-width="1"/></svg>
<span class="t" style="left:926.55px;top:384.97px;font-size:7.1px;color:#ebebeb;transform:scaleX(0.9529);transform-origin:0 0;">Derviş Güneş Ortaokulu</span>
<span class="t" style="left:646.57px;top:416.63px;font-size:8.3px;font-weight:bold;color:#fff;transform:scaleX(0.9744);transform-origin:0 0;">Hunat Hatun İHO</span>
<div class="abs" style="left:633.8px;top:437.35px;width:66.0px;height:10.2px;background:rgba(46,46,46,.9);border-radius:2px"></div>
<svg style="left:634.6px;top:437.95000000000005px" width="8" height="9" viewBox="0 0 8 9"><rect x="2.9" y="0.6" width="2.6" height="4.6" rx="1.3" fill="#e5464e"/><path d="M1.7 3.9 Q1.7 6.5 4.2 6.5 Q6.7 6.5 6.7 3.9" fill="none" stroke="#e5464e" stroke-width="0.8"/><path d="M4.2 6.5 L4.2 8.2 M2.8 8.3 L5.6 8.3" stroke="#e5464e" stroke-width="0.8"/><path d="M0.8 8.2 L7.4 0.6" stroke="#e5464e" stroke-width="1"/></svg>
<span class="t" style="left:645.00px;top:439.80px;font-size:7.1px;color:#ebebeb;transform:scaleX(0.9622);transform-origin:0 0;">Hunat Hatun İHO</span>
<div class="abs" style="left:751.8px;top:399.65px;width:42px;height:42.5px;border-radius:4px;overflow:hidden;background:#2a9a42"><svg style="left:0;top:0" width="42" height="43" viewBox="0 0 42 43"><rect width="42" height="43" fill="#2a9a42"/><path d="M0 0 L30 0 Q18 8 12 22 Q6 24 0 22Z" fill="#22a8da"/><path d="M0 22 Q10 22 14 30 L12 43 L0 43Z" fill="#238a3a"/><path d="M8.6 14.2 L9.4 10 L10.6 7.2 L12.6 9 Q15 8 17 9.4 L18.6 7.6 L19.4 11 Q23 10 26 10.6 Q28 6.6 31.4 8 Q33.6 10.4 31 13 Q32.6 16 32 20 L33 31.6 L30.8 31.6 L29.6 24 L28.6 28.6 L26.6 28.6 L26.2 22.6 Q23 24 20.6 23.6 L20.2 35 L18 35 L17.4 26 L16 33 L13.8 33 L14 22 Q11.6 19.6 11.4 17.2 L8.8 16.4Z" fill="#f0b226"/><path d="M13 17.6 Q16 20 17.4 26 L16 33 L13.8 33 L14 22Z" fill="#f7d264"/><path d="M27.4 9.4 Q29.6 6.8 31.4 8.6 Q32.4 10.6 30.6 12.4 Q30.6 9.8 27.4 9.4Z" fill="#f8d468"/><path d="M11.4 17 Q14.6 18.6 18.6 15.6 L18.4 17 Q14.6 20 11.6 18.4Z" fill="#c8523a"/><circle cx="9" cy="14.6" r="0.9" fill="#a8402e"/><circle cx="13" cy="11.6" r="0.7" fill="#4a2a14"/></svg></div>
<div class="abs" style="left:727.6px;top:437.35px;width:92.2px;height:10.2px;background:rgba(46,46,46,.9);border-radius:2px"></div>
<svg style="left:728.5px;top:437.95000000000005px" width="8" height="9" viewBox="0 0 8 9"><rect x="2.9" y="0.6" width="2.6" height="4.6" rx="1.3" fill="#e5464e"/><path d="M1.7 3.9 Q1.7 6.5 4.2 6.5 Q6.7 6.5 6.7 3.9" fill="none" stroke="#e5464e" stroke-width="0.8"/><path d="M4.2 6.5 L4.2 8.2 M2.8 8.3 L5.6 8.3" stroke="#e5464e" stroke-width="0.8"/><path d="M0.8 8.2 L7.4 0.6" stroke="#e5464e" stroke-width="1"/></svg>
<span class="t" style="left:738.85px;top:439.80px;font-size:7.1px;color:#ebebeb;transform:scaleX(0.9182);transform-origin:0 0;">Murat ARSLANBAŞ-OSM...</span>
<span class="t" style="left:833.12px;top:416.63px;font-size:8.3px;font-weight:bold;color:#fff;transform:scaleX(0.9708);transform-origin:0 0;">Murat  Aydoğan...</span>
<div class="abs" style="left:821.5px;top:437.35px;width:92.2px;height:10.2px;background:rgba(46,46,46,.9);border-radius:2px"></div>
<svg style="left:822.3px;top:437.95000000000005px" width="8" height="9" viewBox="0 0 8 9"><rect x="2.9" y="0.6" width="2.6" height="4.6" rx="1.3" fill="#e5464e"/><path d="M1.7 3.9 Q1.7 6.5 4.2 6.5 Q6.7 6.5 6.7 3.9" fill="none" stroke="#e5464e" stroke-width="0.8"/><path d="M4.2 6.5 L4.2 8.2 M2.8 8.3 L5.6 8.3" stroke="#e5464e" stroke-width="0.8"/><path d="M0.8 8.2 L7.4 0.6" stroke="#e5464e" stroke-width="1"/></svg>
<span class="t" style="left:832.70px;top:439.80px;font-size:7.1px;color:#ebebeb;transform:scaleX(0.9803);transform-origin:0 0;">Murat Aydoğan Şehit Er...</span>
<div class="abs" style="left:939.5px;top:399.65px;width:42px;height:42.2px;background:#8098a7;border-radius:4px"></div>
<span class="t" style="left:953.80px;top:406.63px;font-size:24px;color:#fff;transform:scaleX(1.0000);transform-origin:0 0;">a</span>
<div class="abs" style="left:915.3px;top:437.35px;width:54.0px;height:10.2px;background:rgba(46,46,46,.9);border-radius:2px"></div>
<svg style="left:916.1px;top:437.95000000000005px" width="8" height="9" viewBox="0 0 8 9"><rect x="2.9" y="0.6" width="2.6" height="4.6" rx="1.3" fill="#e5464e"/><path d="M1.7 3.9 Q1.7 6.5 4.2 6.5 Q6.7 6.5 6.7 3.9" fill="none" stroke="#e5464e" stroke-width="0.8"/><path d="M4.2 6.5 L4.2 8.2 M2.8 8.3 L5.6 8.3" stroke="#e5464e" stroke-width="0.8"/><path d="M0.8 8.2 L7.4 0.6" stroke="#e5464e" stroke-width="1"/></svg>
<span class="t" style="left:926.55px;top:439.80px;font-size:7.1px;color:#ebebeb;transform:scaleX(0.9657);transform-origin:0 0;">Ahmet Akbaş</span>
<div class="abs" style="left:800px;top:448.2px;width:39px;height:18.8px;background:#161616;border-radius:0 0 3px 3px"></div>
<svg style="left:815px;top:454.5px" width="9" height="6" viewBox="0 0 9 6"><path d="M1 1.2 L4.5 4.6 L8 1.2" fill="none" stroke="#8f8f8f" stroke-width="1.1"/></svg>
<svg style="left:20px;top:547px" width="16" height="16" viewBox="0 0 16 16"><rect x="5.9" y="2" width="4.2" height="8" rx="2.1" fill="none" stroke="#eef1f8" stroke-width="1"/><path d="M4 7.6 Q4 11.8 8 11.8 Q12 11.8 12 7.6" fill="none" stroke="#eef1f8" stroke-width="1"/><path d="M8 11.8 L8 14.3 M5.8 14.5 L10.2 14.5" stroke="#eef1f8" stroke-width="1" fill="none"/><path d="M1.8 14 L14 1.8" stroke="#d8306e" stroke-width="1.5"/></svg>
<svg style="left:41.9px;top:553.0px" width="6" height="4" viewBox="0 0 6 4"><path d="M0.8 3 L3 0.9 L5.2 3" fill="none" stroke="#aeb7d2" stroke-width="0.9"/></svg>
<span class="t" style="left:23.20px;top:565.98px;font-size:6.6px;color:#cfd5e6;transform:scaleX(0.8353);transform-origin:0 0;">Ses</span>
<svg style="left:69px;top:547px" width="18" height="16" viewBox="0 0 18 16"><rect x="2.3" y="4.8" width="9" height="7.6" rx="1.2" fill="none" stroke="#eef1f8" stroke-width="1.1"/><path d="M11.3 7.6 L15 5.3 L15 11.9 L11.3 9.6" fill="none" stroke="#eef1f8" stroke-width="1.1"/><path d="M2 14 L14.2 1.8" stroke="#d8306e" stroke-width="1.5"/></svg>
<svg style="left:93.9px;top:553.0px" width="6" height="4" viewBox="0 0 6 4"><path d="M0.8 3 L3 0.9 L5.2 3" fill="none" stroke="#aeb7d2" stroke-width="0.9"/></svg>
<span class="t" style="left:69.00px;top:565.98px;font-size:6.6px;color:#cfd5e6;transform:scaleX(0.9665);transform-origin:0 0;">Video</span>
<svg style="left:439px;top:549px" width="14" height="13" viewBox="0 0 14 13"><g fill="none" stroke="#eef1f8" stroke-width="1.05"><circle cx="4.7" cy="3.5" r="1.55"/><circle cx="9.1" cy="5.2" r="1.4"/><path d="M5.8 6.5 L4.5 6.5 Q2.1 6.5 2.1 9 Q2.1 11.6 4.5 11.6 L5.2 11.6"/><ellipse cx="9.1" cy="9.8" rx="3" ry="1.85"/></g></svg>
<span class="t" style="left:454.90px;top:550.65px;font-size:7.4px;font-weight:bold;color:#b9c2dd;transform:scaleX(0.8626);transform-origin:0 0;">46</span>
<svg style="left:471.2px;top:553.0px" width="6" height="4" viewBox="0 0 6 4"><path d="M0.8 3 L3 0.9 L5.2 3" fill="none" stroke="#aeb7d2" stroke-width="0.9"/></svg>
<span class="t" style="left:430.00px;top:565.78px;font-size:6.6px;color:#cfd5e6;transform:scaleX(0.9392);transform-origin:0 0;">Katılımcılar</span>
<svg style="left:497px;top:548px" width="15" height="15" viewBox="0 0 15 15"><path d="M4.2 3.4 Q4.6 1.4 6.6 1.4 L11.4 1.4 Q13.6 1.4 13.6 3.6 L13.6 7 Q13.6 8.8 11.9 9" fill="none" stroke="#eef1f8" stroke-width="1"/><path d="M3.4 3.9 L9.2 3.9 Q11.4 3.9 11.4 6.1 L11.4 8.9 Q11.4 11.1 9.2 11.1 L5.2 11.1 L3 13.2 L3 11.1 Q1.2 10.9 1.2 8.9 L1.2 6.1 Q1.2 3.9 3.4 3.9Z" fill="none" stroke="#eef1f8" stroke-width="1"/><circle cx="4.3" cy="7.5" r="0.6" fill="#eef1f8"/><circle cx="6.3" cy="7.5" r="0.6" fill="#eef1f8"/><circle cx="8.3" cy="7.5" r="0.6" fill="#eef1f8"/></svg>
<svg style="left:519px;top:553.0px" width="6" height="4" viewBox="0 0 6 4"><path d="M0.8 3 L3 0.9 L5.2 3" fill="none" stroke="#aeb7d2" stroke-width="0.9"/></svg>
<span class="t" style="left:494.70px;top:565.78px;font-size:6.6px;color:#cfd5e6;transform:scaleX(0.9465);transform-origin:0 0;">Sohbet</span>
<svg style="left:542px;top:549px" width="15" height="13" viewBox="0 0 15 13"><path d="M7.5 11.6 Q1.2 7.6 1.2 4.4 Q1.2 1.4 4.1 1.4 Q6.2 1.4 7.5 3.4 Q8.8 1.4 10.9 1.4 Q13.8 1.4 13.8 4.4 Q13.8 7.6 7.5 11.6Z" fill="none" stroke="#eef1f8" stroke-width="1.1"/></svg>
<svg style="left:561.7px;top:553.0px" width="6" height="4" viewBox="0 0 6 4"><path d="M0.8 3 L3 0.9 L5.2 3" fill="none" stroke="#aeb7d2" stroke-width="0.9"/></svg>
<span class="t" style="left:537.20px;top:565.78px;font-size:6.6px;color:#cfd5e6;transform:scaleX(0.9390);transform-origin:0 0;">Tepki ver</span>
<div class="abs" style="left:590.5px;top:550px;width:13.5px;height:10.6px;background:#22e58f;border-radius:1.6px"></div>
<svg style="left:593.5px;top:551.8px" width="7.5" height="7.5" viewBox="0 0 8 8"><path d="M4 0.6 L7.3 4 L5.1 4 L5.1 7.2 L2.9 7.2 L2.9 4 L0.7 4Z" fill="#0a2a4a"/></svg>
<span class="t" style="left:588.70px;top:565.78px;font-size:6.6px;color:#cfd5e6;transform:scaleX(0.8682);transform-origin:0 0;">Paylaş</span>
<svg style="left:638.5px;top:548.2px" width="14.4" height="14.4" viewBox="0 0 14.4 14.4"><circle cx="7.2" cy="7.2" r="6.3" fill="none" stroke="#eef1f8" stroke-width="1"/><circle cx="4.4" cy="7.2" r="0.75" fill="#eef1f8"/><circle cx="7.2" cy="7.2" r="0.75" fill="#eef1f8"/><circle cx="10" cy="7.2" r="0.75" fill="#eef1f8"/></svg>
<span class="t" style="left:631.20px;top:565.78px;font-size:6.6px;color:#cfd5e6;transform:scaleX(0.9381);transform-origin:0 0;">Daha fazla</span>
<svg style="left:990px;top:546px" width="18" height="18" viewBox="0 0 18 18"><path d="M7.6 16.1 L7.6 2.2 L15.2 2.2 L15.2 16.1 L11.4 16.1" fill="none" stroke="#c6217d" stroke-width="1.25"/><circle cx="5.5" cy="5.4" r="1.5" fill="none" stroke="#eef1f8" stroke-width="1"/><path d="M2.9 10.4 L4.3 8 L6.5 7.8 L7.6 9.9 L9.3 10.6 M5.1 8 L4.7 11.6 L6.9 13.2 L7.1 16.2 M4.6 11.6 L3.8 13.8 L2.2 16.2" fill="none" stroke="#eef1f8" stroke-width="1.35" stroke-linejoin="round" stroke-linecap="round"/></svg>
<span class="t" style="left:992.00px;top:566.18px;font-size:6.6px;color:#cfd5e6;transform:scaleX(0.9938);transform-origin:0 0;">Ayrıl</span>
</div>
</body>
</html>
